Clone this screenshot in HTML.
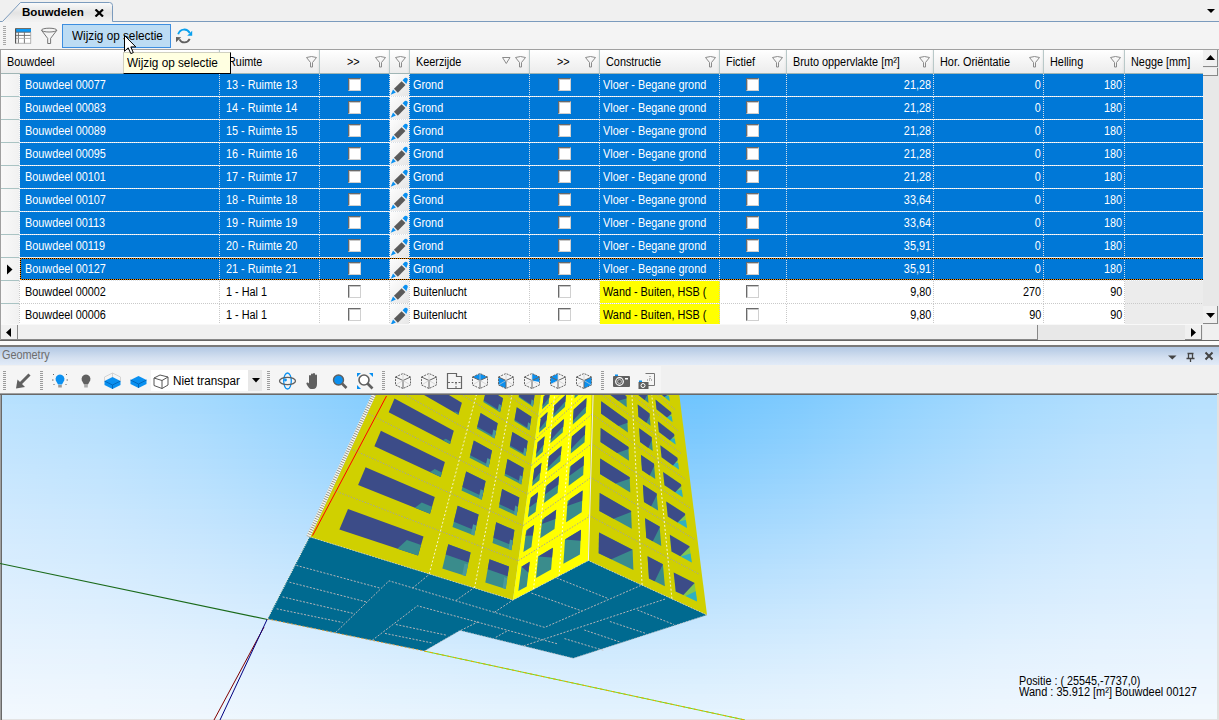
<!DOCTYPE html><html><head><meta charset="utf-8"><style>
*{box-sizing:border-box;margin:0;padding:0}
html,body{width:1219px;height:720px;overflow:hidden;background:#f0f0f0;font-family:"Liberation Sans",sans-serif;font-size:11px;color:#000;position:relative}
.a{position:absolute}
.t{position:absolute;white-space:nowrap;transform-origin:0 0}
.tr{position:absolute;white-space:nowrap;transform-origin:100% 0}
</style></head><body><div class="a" style="left:0px;top:0px;width:1219px;height:22px;background:#f0f0f0"></div>
<svg class="a" style="left:0;top:0" width="1219" height="24">
<defs><linearGradient id="tabg" x1="0" y1="0" x2="0" y2="1"><stop offset="0" stop-color="#fbfbfb"/><stop offset="0.55" stop-color="#e3e3e3"/><stop offset="1" stop-color="#f2f2f2"/></linearGradient></defs>
<path d="M2.5 21.5 L20.5 2.5 L109.5 2.5 Q112.5 2.5 112.5 5.5 L112.5 21.5 Z" fill="url(#tabg)"/>
<path d="M0 21.5 L2.5 21.5 L20.5 2.5 L109.5 2.5 Q112.5 2.5 112.5 5.5 L112.5 21.5 L1219 21.5" fill="none" stroke="#7b9bbd" stroke-width="1"/>
<path d="M1207 9 L1215 9 L1211 13 Z" fill="#000"/>
</svg>
<div class="t" style="left:22px;top:5px;line-height:13px;font-weight:bold;font-size:11.6px">Bouwdelen</div>
<svg class="a" style="left:94px;top:9px" width="11" height="8"><path d="M1.5 0.5 L9 7.5 M9 0.5 L1.5 7.5" stroke="#000" stroke-width="2.2"/></svg>
<div class="a" style="left:0px;top:22px;width:1219px;height:27px;background:#f4f4f4"></div>
<svg class="a" style="left:2px;top:25px" width="4" height="21"><rect x="1" y="1" width="3" height="1" fill="#a8a8a8"/><rect x="1" y="3" width="3" height="1" fill="#a8a8a8"/><rect x="1" y="5" width="3" height="1" fill="#a8a8a8"/><rect x="1" y="7" width="3" height="1" fill="#a8a8a8"/><rect x="1" y="9" width="3" height="1" fill="#a8a8a8"/><rect x="1" y="11" width="3" height="1" fill="#a8a8a8"/><rect x="1" y="13" width="3" height="1" fill="#a8a8a8"/><rect x="1" y="15" width="3" height="1" fill="#a8a8a8"/><rect x="1" y="17" width="3" height="1" fill="#a8a8a8"/><rect x="1" y="19" width="3" height="1" fill="#a8a8a8"/></svg>
<svg class="a" style="left:14px;top:27px" width="19" height="19">
<rect x="1.5" y="1.5" width="15.5" height="15" fill="#fff"/>
<rect x="1.5" y="1.5" width="15.5" height="3.8" fill="#0a9af8"/>
<path d="M1.5 1.5 H17" stroke="#705840" stroke-width="0.8"/>
<path d="M1.5 5.2 H17 M1.5 8.4 H17 M4.4 5.2 V16.6 M10.4 5.2 V16.6" stroke="#666" stroke-width="0.9"/>
<path d="M1.5 11.4 H17 M1.5 16.3 H17 M16.7 5.2 V16.6" stroke="#aaa" stroke-width="0.9"/>
<path d="M1.6 1.5 V16.6" stroke="#555" stroke-width="1.2"/>
</svg>
<svg class="a" style="left:40px;top:27px" width="19" height="19">
<ellipse cx="9.1" cy="3.1" rx="7.6" ry="1.9" fill="none" stroke="#666" stroke-width="0.9"/>
<path d="M1.5 3.3 L7.7 11.4 V16.5 H10.6 V11.4 L16.8 3.3" fill="none" stroke="#666" stroke-width="0.9"/>
</svg>
<div class="a" style="left:62px;top:24px;width:109px;height:24px;background:#bcdcf4;border:1px solid #3d8ee0"></div>
<div class="t" style="left:71.5px;top:29.84px;font-size:12px;line-height:12px;transform:scaleX(0.98);color:#000">Wijzig op selectie</div>
<svg class="a" style="left:175px;top:28px" width="19" height="17">
<path d="M3.2 6.2 C5 0.5 12 0 14.8 5" fill="none" stroke="#0aa0ee" stroke-width="1.9"/>
<path d="M17.2 2.8 L17.2 7.8 L12.2 7.8 Z" fill="#0aa0ee"/>
<path d="M14.7 10.8 C12.5 15.5 6.5 15.5 4.5 11.3" fill="none" stroke="#606060" stroke-width="1.9"/>
<path d="M1 9 L6.2 9.2 L1 14.2 Z" fill="#606060"/>
</svg>
<div class="a" style="left:0px;top:49px;width:1219px;height:292px;background:#ffffff"></div>
<div class="a" style="left:1px;top:50px;width:1202px;height:23px;background:linear-gradient(#ffffff,#f7f7f7 40%,#ececec)"></div>
<div class="a" style="left:1px;top:73px;width:1202px;height:1px;background:#9fb5b5"></div>
<div class="a" style="left:219px;top:50px;width:1px;height:23px;background:#b9c9c9"></div>
<div class="a" style="left:217px;top:50px;width:2px;height:23px;background:linear-gradient(90deg,rgba(0,0,0,0),rgba(0,0,0,0.05))"></div>
<div class="a" style="left:319px;top:50px;width:1px;height:23px;background:#b9c9c9"></div>
<div class="a" style="left:317px;top:50px;width:2px;height:23px;background:linear-gradient(90deg,rgba(0,0,0,0),rgba(0,0,0,0.05))"></div>
<div class="a" style="left:389px;top:50px;width:1px;height:23px;background:#b9c9c9"></div>
<div class="a" style="left:387px;top:50px;width:2px;height:23px;background:linear-gradient(90deg,rgba(0,0,0,0),rgba(0,0,0,0.05))"></div>
<div class="a" style="left:409px;top:50px;width:1px;height:23px;background:#b9c9c9"></div>
<div class="a" style="left:407px;top:50px;width:2px;height:23px;background:linear-gradient(90deg,rgba(0,0,0,0),rgba(0,0,0,0.05))"></div>
<div class="a" style="left:529px;top:50px;width:1px;height:23px;background:#b9c9c9"></div>
<div class="a" style="left:527px;top:50px;width:2px;height:23px;background:linear-gradient(90deg,rgba(0,0,0,0),rgba(0,0,0,0.05))"></div>
<div class="a" style="left:599px;top:50px;width:1px;height:23px;background:#b9c9c9"></div>
<div class="a" style="left:597px;top:50px;width:2px;height:23px;background:linear-gradient(90deg,rgba(0,0,0,0),rgba(0,0,0,0.05))"></div>
<div class="a" style="left:719px;top:50px;width:1px;height:23px;background:#b9c9c9"></div>
<div class="a" style="left:717px;top:50px;width:2px;height:23px;background:linear-gradient(90deg,rgba(0,0,0,0),rgba(0,0,0,0.05))"></div>
<div class="a" style="left:786px;top:50px;width:1px;height:23px;background:#b9c9c9"></div>
<div class="a" style="left:784px;top:50px;width:2px;height:23px;background:linear-gradient(90deg,rgba(0,0,0,0),rgba(0,0,0,0.05))"></div>
<div class="a" style="left:933px;top:50px;width:1px;height:23px;background:#b9c9c9"></div>
<div class="a" style="left:931px;top:50px;width:2px;height:23px;background:linear-gradient(90deg,rgba(0,0,0,0),rgba(0,0,0,0.05))"></div>
<div class="a" style="left:1043px;top:50px;width:1px;height:23px;background:#b9c9c9"></div>
<div class="a" style="left:1041px;top:50px;width:2px;height:23px;background:linear-gradient(90deg,rgba(0,0,0,0),rgba(0,0,0,0.05))"></div>
<div class="a" style="left:1124px;top:50px;width:1px;height:23px;background:#b9c9c9"></div>
<div class="a" style="left:1122px;top:50px;width:2px;height:23px;background:linear-gradient(90deg,rgba(0,0,0,0),rgba(0,0,0,0.05))"></div>
<div class="t" style="left:6.5px;top:55.74px;font-size:12px;line-height:12px;transform:scaleX(0.905);color:#000">Bouwdeel</div>
<div class="t" style="left:227.5px;top:55.74px;font-size:12px;line-height:12px;transform:scaleX(0.905);color:#000">Ruimte</div>
<div class="t" style="left:346.5px;top:55.74px;font-size:12px;line-height:12px;transform:scaleX(0.905);color:#000">&gt;&gt;</div>
<div class="t" style="left:415.5px;top:55.74px;font-size:12px;line-height:12px;transform:scaleX(0.905);color:#000">Keerzijde</div>
<div class="t" style="left:556.5px;top:55.74px;font-size:12px;line-height:12px;transform:scaleX(0.905);color:#000">&gt;&gt;</div>
<div class="t" style="left:605.5px;top:55.74px;font-size:12px;line-height:12px;transform:scaleX(0.905);color:#000">Constructie</div>
<div class="t" style="left:725.5px;top:55.74px;font-size:12px;line-height:12px;transform:scaleX(0.905);color:#000">Fictief</div>
<div class="t" style="left:792.5px;top:55.74px;font-size:12px;line-height:12px;transform:scaleX(0.905);color:#000">Bruto oppervlakte [m²]</div>
<div class="t" style="left:939.5px;top:55.74px;font-size:12px;line-height:12px;transform:scaleX(0.905);color:#000">Hor. Oriëntatie</div>
<div class="t" style="left:1049.5px;top:55.74px;font-size:12px;line-height:12px;transform:scaleX(0.905);color:#000">Helling</div>
<div class="t" style="left:1130.5px;top:55.74px;font-size:12px;line-height:12px;transform:scaleX(0.905);color:#000">Negge [mm]</div>
<svg class="a" style="left:205px;top:56px" width="12" height="12"><path d="M0.5 1.5 Q5.5 -0.5 10.5 1.5 L6.5 6.5 L6.5 11 L4.5 11 L4.5 6.5 Z" fill="none" stroke="#8a8a8a" stroke-width="1"/></svg>
<svg class="a" style="left:306px;top:56px" width="12" height="12"><path d="M0.5 1.5 Q5.5 -0.5 10.5 1.5 L6.5 6.5 L6.5 11 L4.5 11 L4.5 6.5 Z" fill="none" stroke="#8a8a8a" stroke-width="1"/></svg>
<svg class="a" style="left:375px;top:56px" width="12" height="12"><path d="M0.5 1.5 Q5.5 -0.5 10.5 1.5 L6.5 6.5 L6.5 11 L4.5 11 L4.5 6.5 Z" fill="none" stroke="#8a8a8a" stroke-width="1"/></svg>
<svg class="a" style="left:395px;top:56px" width="12" height="12"><path d="M0.5 1.5 Q5.5 -0.5 10.5 1.5 L6.5 6.5 L6.5 11 L4.5 11 L4.5 6.5 Z" fill="none" stroke="#8a8a8a" stroke-width="1"/></svg>
<svg class="a" style="left:515px;top:56px" width="12" height="12"><path d="M0.5 1.5 Q5.5 -0.5 10.5 1.5 L6.5 6.5 L6.5 11 L4.5 11 L4.5 6.5 Z" fill="none" stroke="#8a8a8a" stroke-width="1"/></svg>
<svg class="a" style="left:585px;top:56px" width="12" height="12"><path d="M0.5 1.5 Q5.5 -0.5 10.5 1.5 L6.5 6.5 L6.5 11 L4.5 11 L4.5 6.5 Z" fill="none" stroke="#8a8a8a" stroke-width="1"/></svg>
<svg class="a" style="left:705px;top:56px" width="12" height="12"><path d="M0.5 1.5 Q5.5 -0.5 10.5 1.5 L6.5 6.5 L6.5 11 L4.5 11 L4.5 6.5 Z" fill="none" stroke="#8a8a8a" stroke-width="1"/></svg>
<svg class="a" style="left:772px;top:56px" width="12" height="12"><path d="M0.5 1.5 Q5.5 -0.5 10.5 1.5 L6.5 6.5 L6.5 11 L4.5 11 L4.5 6.5 Z" fill="none" stroke="#8a8a8a" stroke-width="1"/></svg>
<svg class="a" style="left:919px;top:56px" width="12" height="12"><path d="M0.5 1.5 Q5.5 -0.5 10.5 1.5 L6.5 6.5 L6.5 11 L4.5 11 L4.5 6.5 Z" fill="none" stroke="#8a8a8a" stroke-width="1"/></svg>
<svg class="a" style="left:1029px;top:56px" width="12" height="12"><path d="M0.5 1.5 Q5.5 -0.5 10.5 1.5 L6.5 6.5 L6.5 11 L4.5 11 L4.5 6.5 Z" fill="none" stroke="#8a8a8a" stroke-width="1"/></svg>
<svg class="a" style="left:1110px;top:56px" width="12" height="12"><path d="M0.5 1.5 Q5.5 -0.5 10.5 1.5 L6.5 6.5 L6.5 11 L4.5 11 L4.5 6.5 Z" fill="none" stroke="#8a8a8a" stroke-width="1"/></svg>
<svg class="a" style="left:502px;top:57px" width="9" height="8"><path d="M0.5 0.5 H8 L4.25 6.5 Z" fill="none" stroke="#8a8a8a"/></svg>
<div class="a" style="left:1px;top:74px;width:18px;height:22px;background:linear-gradient(90deg,#f9f9f9,#f1f1f1)"></div>
<div class="a" style="left:1px;top:96px;width:18px;height:1px;background:#a9c3c3"></div>
<div class="a" style="left:20px;top:74px;width:1183px;height:22px;background:#0078d7"></div>
<div class="a" style="left:19px;top:96px;width:1106px;height:1px;background:repeating-linear-gradient(90deg,#d9dfe6 0 1px,transparent 1px 2px)"></div>
<div class="a" style="left:1125px;top:96px;width:78px;height:1px;background:repeating-linear-gradient(90deg,#d9dfe6 0 1px,transparent 1px 2px)"></div>
<div class="a" style="left:19px;top:74px;width:1px;height:22px;background:repeating-linear-gradient(180deg,#d9dfe6 0 1px,transparent 1px 2px)"></div>
<div class="a" style="left:219px;top:74px;width:1px;height:22px;background:repeating-linear-gradient(180deg,#d9dfe6 0 1px,transparent 1px 2px)"></div>
<div class="a" style="left:319px;top:74px;width:1px;height:22px;background:repeating-linear-gradient(180deg,#d9dfe6 0 1px,transparent 1px 2px)"></div>
<div class="a" style="left:389px;top:74px;width:1px;height:22px;background:repeating-linear-gradient(180deg,#d9dfe6 0 1px,transparent 1px 2px)"></div>
<div class="a" style="left:409px;top:74px;width:1px;height:22px;background:repeating-linear-gradient(180deg,#d9dfe6 0 1px,transparent 1px 2px)"></div>
<div class="a" style="left:529px;top:74px;width:1px;height:22px;background:repeating-linear-gradient(180deg,#d9dfe6 0 1px,transparent 1px 2px)"></div>
<div class="a" style="left:599px;top:74px;width:1px;height:22px;background:repeating-linear-gradient(180deg,#d9dfe6 0 1px,transparent 1px 2px)"></div>
<div class="a" style="left:719px;top:74px;width:1px;height:22px;background:repeating-linear-gradient(180deg,#d9dfe6 0 1px,transparent 1px 2px)"></div>
<div class="a" style="left:786px;top:74px;width:1px;height:22px;background:repeating-linear-gradient(180deg,#d9dfe6 0 1px,transparent 1px 2px)"></div>
<div class="a" style="left:933px;top:74px;width:1px;height:22px;background:repeating-linear-gradient(180deg,#d9dfe6 0 1px,transparent 1px 2px)"></div>
<div class="a" style="left:1043px;top:74px;width:1px;height:22px;background:repeating-linear-gradient(180deg,#d9dfe6 0 1px,transparent 1px 2px)"></div>
<div class="a" style="left:1124px;top:74px;width:1px;height:22px;background:repeating-linear-gradient(180deg,#d9dfe6 0 1px,transparent 1px 2px)"></div>
<div class="t" style="left:25px;top:78.74px;font-size:12px;line-height:12px;transform:scaleX(0.905);color:#fff">Bouwdeel 00077</div>
<div class="t" style="left:226px;top:78.74px;font-size:12px;line-height:12px;transform:scaleX(0.905);color:#fff">13 - Ruimte 13</div>
<div class="t" style="left:413px;top:78.74px;font-size:12px;line-height:12px;transform:scaleX(0.905);color:#fff">Grond</div>
<div class="t" style="left:603px;top:78.74px;font-size:12px;line-height:12px;transform:scaleX(0.905);color:#fff">Vloer - Begane grond</div>
<div class="tr" style="right:288px;top:78.74px;font-size:12px;line-height:12px;transform:scaleX(0.905);color:#fff">21,28</div>
<div class="tr" style="right:178px;top:78.74px;font-size:12px;line-height:12px;transform:scaleX(0.905);color:#fff">0</div>
<div class="tr" style="right:97px;top:78.74px;font-size:12px;line-height:12px;transform:scaleX(0.905);color:#fff">180</div>
<div class="a" style="left:348px;top:78px;width:13px;height:13px;background:#fff;border:1px solid #6a6a6a;border-right-color:#d0d0d0;border-bottom-color:#d0d0d0;box-shadow:inset 1px 1px 0 #c8c8c8"></div>
<div class="a" style="left:558px;top:78px;width:13px;height:13px;background:#fff;border:1px solid #6a6a6a;border-right-color:#d0d0d0;border-bottom-color:#d0d0d0;box-shadow:inset 1px 1px 0 #c8c8c8"></div>
<div class="a" style="left:746px;top:78px;width:13px;height:13px;background:#fff;border:1px solid #6a6a6a;border-right-color:#d0d0d0;border-bottom-color:#d0d0d0;box-shadow:inset 1px 1px 0 #c8c8c8"></div>
<div class="a" style="left:390px;top:74px;width:19px;height:22px;background:linear-gradient(135deg,#fdfdfd,#e6e6e6)"></div>
<svg class="a" style="left:390px;top:76px" width="19" height="20"><g transform="translate(9 10.2) scale(1.15) translate(-9.2 -9.6)"><path d="M2 17 L4 12.5 L6.5 15 Z" fill="#0a90f0"/><path d="M4.8 11.8 L11.5 5.2 L14.8 8.5 L8.2 15.2 Z" fill="#5a5a5a"/><path d="M12.3 4.4 L14.2 2.5 Q15.5 1.8 16.5 2.8 Q17.3 4 16.5 5 L15.6 7.7 Z" fill="#0a90f0"/></g></svg>
<div class="a" style="left:1px;top:97px;width:18px;height:22px;background:linear-gradient(90deg,#f9f9f9,#f1f1f1)"></div>
<div class="a" style="left:1px;top:119px;width:18px;height:1px;background:#a9c3c3"></div>
<div class="a" style="left:20px;top:97px;width:1183px;height:22px;background:#0078d7"></div>
<div class="a" style="left:19px;top:119px;width:1106px;height:1px;background:repeating-linear-gradient(90deg,#d9dfe6 0 1px,transparent 1px 2px)"></div>
<div class="a" style="left:1125px;top:119px;width:78px;height:1px;background:repeating-linear-gradient(90deg,#d9dfe6 0 1px,transparent 1px 2px)"></div>
<div class="a" style="left:19px;top:97px;width:1px;height:22px;background:repeating-linear-gradient(180deg,#d9dfe6 0 1px,transparent 1px 2px)"></div>
<div class="a" style="left:219px;top:97px;width:1px;height:22px;background:repeating-linear-gradient(180deg,#d9dfe6 0 1px,transparent 1px 2px)"></div>
<div class="a" style="left:319px;top:97px;width:1px;height:22px;background:repeating-linear-gradient(180deg,#d9dfe6 0 1px,transparent 1px 2px)"></div>
<div class="a" style="left:389px;top:97px;width:1px;height:22px;background:repeating-linear-gradient(180deg,#d9dfe6 0 1px,transparent 1px 2px)"></div>
<div class="a" style="left:409px;top:97px;width:1px;height:22px;background:repeating-linear-gradient(180deg,#d9dfe6 0 1px,transparent 1px 2px)"></div>
<div class="a" style="left:529px;top:97px;width:1px;height:22px;background:repeating-linear-gradient(180deg,#d9dfe6 0 1px,transparent 1px 2px)"></div>
<div class="a" style="left:599px;top:97px;width:1px;height:22px;background:repeating-linear-gradient(180deg,#d9dfe6 0 1px,transparent 1px 2px)"></div>
<div class="a" style="left:719px;top:97px;width:1px;height:22px;background:repeating-linear-gradient(180deg,#d9dfe6 0 1px,transparent 1px 2px)"></div>
<div class="a" style="left:786px;top:97px;width:1px;height:22px;background:repeating-linear-gradient(180deg,#d9dfe6 0 1px,transparent 1px 2px)"></div>
<div class="a" style="left:933px;top:97px;width:1px;height:22px;background:repeating-linear-gradient(180deg,#d9dfe6 0 1px,transparent 1px 2px)"></div>
<div class="a" style="left:1043px;top:97px;width:1px;height:22px;background:repeating-linear-gradient(180deg,#d9dfe6 0 1px,transparent 1px 2px)"></div>
<div class="a" style="left:1124px;top:97px;width:1px;height:22px;background:repeating-linear-gradient(180deg,#d9dfe6 0 1px,transparent 1px 2px)"></div>
<div class="t" style="left:25px;top:101.74px;font-size:12px;line-height:12px;transform:scaleX(0.905);color:#fff">Bouwdeel 00083</div>
<div class="t" style="left:226px;top:101.74px;font-size:12px;line-height:12px;transform:scaleX(0.905);color:#fff">14 - Ruimte 14</div>
<div class="t" style="left:413px;top:101.74px;font-size:12px;line-height:12px;transform:scaleX(0.905);color:#fff">Grond</div>
<div class="t" style="left:603px;top:101.74px;font-size:12px;line-height:12px;transform:scaleX(0.905);color:#fff">Vloer - Begane grond</div>
<div class="tr" style="right:288px;top:101.74px;font-size:12px;line-height:12px;transform:scaleX(0.905);color:#fff">21,28</div>
<div class="tr" style="right:178px;top:101.74px;font-size:12px;line-height:12px;transform:scaleX(0.905);color:#fff">0</div>
<div class="tr" style="right:97px;top:101.74px;font-size:12px;line-height:12px;transform:scaleX(0.905);color:#fff">180</div>
<div class="a" style="left:348px;top:101px;width:13px;height:13px;background:#fff;border:1px solid #6a6a6a;border-right-color:#d0d0d0;border-bottom-color:#d0d0d0;box-shadow:inset 1px 1px 0 #c8c8c8"></div>
<div class="a" style="left:558px;top:101px;width:13px;height:13px;background:#fff;border:1px solid #6a6a6a;border-right-color:#d0d0d0;border-bottom-color:#d0d0d0;box-shadow:inset 1px 1px 0 #c8c8c8"></div>
<div class="a" style="left:746px;top:101px;width:13px;height:13px;background:#fff;border:1px solid #6a6a6a;border-right-color:#d0d0d0;border-bottom-color:#d0d0d0;box-shadow:inset 1px 1px 0 #c8c8c8"></div>
<div class="a" style="left:390px;top:97px;width:19px;height:22px;background:linear-gradient(135deg,#fdfdfd,#e6e6e6)"></div>
<svg class="a" style="left:390px;top:99px" width="19" height="20"><g transform="translate(9 10.2) scale(1.15) translate(-9.2 -9.6)"><path d="M2 17 L4 12.5 L6.5 15 Z" fill="#0a90f0"/><path d="M4.8 11.8 L11.5 5.2 L14.8 8.5 L8.2 15.2 Z" fill="#5a5a5a"/><path d="M12.3 4.4 L14.2 2.5 Q15.5 1.8 16.5 2.8 Q17.3 4 16.5 5 L15.6 7.7 Z" fill="#0a90f0"/></g></svg>
<div class="a" style="left:1px;top:120px;width:18px;height:22px;background:linear-gradient(90deg,#f9f9f9,#f1f1f1)"></div>
<div class="a" style="left:1px;top:142px;width:18px;height:1px;background:#a9c3c3"></div>
<div class="a" style="left:20px;top:120px;width:1183px;height:22px;background:#0078d7"></div>
<div class="a" style="left:19px;top:142px;width:1106px;height:1px;background:repeating-linear-gradient(90deg,#d9dfe6 0 1px,transparent 1px 2px)"></div>
<div class="a" style="left:1125px;top:142px;width:78px;height:1px;background:repeating-linear-gradient(90deg,#d9dfe6 0 1px,transparent 1px 2px)"></div>
<div class="a" style="left:19px;top:120px;width:1px;height:22px;background:repeating-linear-gradient(180deg,#d9dfe6 0 1px,transparent 1px 2px)"></div>
<div class="a" style="left:219px;top:120px;width:1px;height:22px;background:repeating-linear-gradient(180deg,#d9dfe6 0 1px,transparent 1px 2px)"></div>
<div class="a" style="left:319px;top:120px;width:1px;height:22px;background:repeating-linear-gradient(180deg,#d9dfe6 0 1px,transparent 1px 2px)"></div>
<div class="a" style="left:389px;top:120px;width:1px;height:22px;background:repeating-linear-gradient(180deg,#d9dfe6 0 1px,transparent 1px 2px)"></div>
<div class="a" style="left:409px;top:120px;width:1px;height:22px;background:repeating-linear-gradient(180deg,#d9dfe6 0 1px,transparent 1px 2px)"></div>
<div class="a" style="left:529px;top:120px;width:1px;height:22px;background:repeating-linear-gradient(180deg,#d9dfe6 0 1px,transparent 1px 2px)"></div>
<div class="a" style="left:599px;top:120px;width:1px;height:22px;background:repeating-linear-gradient(180deg,#d9dfe6 0 1px,transparent 1px 2px)"></div>
<div class="a" style="left:719px;top:120px;width:1px;height:22px;background:repeating-linear-gradient(180deg,#d9dfe6 0 1px,transparent 1px 2px)"></div>
<div class="a" style="left:786px;top:120px;width:1px;height:22px;background:repeating-linear-gradient(180deg,#d9dfe6 0 1px,transparent 1px 2px)"></div>
<div class="a" style="left:933px;top:120px;width:1px;height:22px;background:repeating-linear-gradient(180deg,#d9dfe6 0 1px,transparent 1px 2px)"></div>
<div class="a" style="left:1043px;top:120px;width:1px;height:22px;background:repeating-linear-gradient(180deg,#d9dfe6 0 1px,transparent 1px 2px)"></div>
<div class="a" style="left:1124px;top:120px;width:1px;height:22px;background:repeating-linear-gradient(180deg,#d9dfe6 0 1px,transparent 1px 2px)"></div>
<div class="t" style="left:25px;top:124.74px;font-size:12px;line-height:12px;transform:scaleX(0.905);color:#fff">Bouwdeel 00089</div>
<div class="t" style="left:226px;top:124.74px;font-size:12px;line-height:12px;transform:scaleX(0.905);color:#fff">15 - Ruimte 15</div>
<div class="t" style="left:413px;top:124.74px;font-size:12px;line-height:12px;transform:scaleX(0.905);color:#fff">Grond</div>
<div class="t" style="left:603px;top:124.74px;font-size:12px;line-height:12px;transform:scaleX(0.905);color:#fff">Vloer - Begane grond</div>
<div class="tr" style="right:288px;top:124.74px;font-size:12px;line-height:12px;transform:scaleX(0.905);color:#fff">21,28</div>
<div class="tr" style="right:178px;top:124.74px;font-size:12px;line-height:12px;transform:scaleX(0.905);color:#fff">0</div>
<div class="tr" style="right:97px;top:124.74px;font-size:12px;line-height:12px;transform:scaleX(0.905);color:#fff">180</div>
<div class="a" style="left:348px;top:124px;width:13px;height:13px;background:#fff;border:1px solid #6a6a6a;border-right-color:#d0d0d0;border-bottom-color:#d0d0d0;box-shadow:inset 1px 1px 0 #c8c8c8"></div>
<div class="a" style="left:558px;top:124px;width:13px;height:13px;background:#fff;border:1px solid #6a6a6a;border-right-color:#d0d0d0;border-bottom-color:#d0d0d0;box-shadow:inset 1px 1px 0 #c8c8c8"></div>
<div class="a" style="left:746px;top:124px;width:13px;height:13px;background:#fff;border:1px solid #6a6a6a;border-right-color:#d0d0d0;border-bottom-color:#d0d0d0;box-shadow:inset 1px 1px 0 #c8c8c8"></div>
<div class="a" style="left:390px;top:120px;width:19px;height:22px;background:linear-gradient(135deg,#fdfdfd,#e6e6e6)"></div>
<svg class="a" style="left:390px;top:122px" width="19" height="20"><g transform="translate(9 10.2) scale(1.15) translate(-9.2 -9.6)"><path d="M2 17 L4 12.5 L6.5 15 Z" fill="#0a90f0"/><path d="M4.8 11.8 L11.5 5.2 L14.8 8.5 L8.2 15.2 Z" fill="#5a5a5a"/><path d="M12.3 4.4 L14.2 2.5 Q15.5 1.8 16.5 2.8 Q17.3 4 16.5 5 L15.6 7.7 Z" fill="#0a90f0"/></g></svg>
<div class="a" style="left:1px;top:143px;width:18px;height:22px;background:linear-gradient(90deg,#f9f9f9,#f1f1f1)"></div>
<div class="a" style="left:1px;top:165px;width:18px;height:1px;background:#a9c3c3"></div>
<div class="a" style="left:20px;top:143px;width:1183px;height:22px;background:#0078d7"></div>
<div class="a" style="left:19px;top:165px;width:1106px;height:1px;background:repeating-linear-gradient(90deg,#d9dfe6 0 1px,transparent 1px 2px)"></div>
<div class="a" style="left:1125px;top:165px;width:78px;height:1px;background:repeating-linear-gradient(90deg,#d9dfe6 0 1px,transparent 1px 2px)"></div>
<div class="a" style="left:19px;top:143px;width:1px;height:22px;background:repeating-linear-gradient(180deg,#d9dfe6 0 1px,transparent 1px 2px)"></div>
<div class="a" style="left:219px;top:143px;width:1px;height:22px;background:repeating-linear-gradient(180deg,#d9dfe6 0 1px,transparent 1px 2px)"></div>
<div class="a" style="left:319px;top:143px;width:1px;height:22px;background:repeating-linear-gradient(180deg,#d9dfe6 0 1px,transparent 1px 2px)"></div>
<div class="a" style="left:389px;top:143px;width:1px;height:22px;background:repeating-linear-gradient(180deg,#d9dfe6 0 1px,transparent 1px 2px)"></div>
<div class="a" style="left:409px;top:143px;width:1px;height:22px;background:repeating-linear-gradient(180deg,#d9dfe6 0 1px,transparent 1px 2px)"></div>
<div class="a" style="left:529px;top:143px;width:1px;height:22px;background:repeating-linear-gradient(180deg,#d9dfe6 0 1px,transparent 1px 2px)"></div>
<div class="a" style="left:599px;top:143px;width:1px;height:22px;background:repeating-linear-gradient(180deg,#d9dfe6 0 1px,transparent 1px 2px)"></div>
<div class="a" style="left:719px;top:143px;width:1px;height:22px;background:repeating-linear-gradient(180deg,#d9dfe6 0 1px,transparent 1px 2px)"></div>
<div class="a" style="left:786px;top:143px;width:1px;height:22px;background:repeating-linear-gradient(180deg,#d9dfe6 0 1px,transparent 1px 2px)"></div>
<div class="a" style="left:933px;top:143px;width:1px;height:22px;background:repeating-linear-gradient(180deg,#d9dfe6 0 1px,transparent 1px 2px)"></div>
<div class="a" style="left:1043px;top:143px;width:1px;height:22px;background:repeating-linear-gradient(180deg,#d9dfe6 0 1px,transparent 1px 2px)"></div>
<div class="a" style="left:1124px;top:143px;width:1px;height:22px;background:repeating-linear-gradient(180deg,#d9dfe6 0 1px,transparent 1px 2px)"></div>
<div class="t" style="left:25px;top:147.74px;font-size:12px;line-height:12px;transform:scaleX(0.905);color:#fff">Bouwdeel 00095</div>
<div class="t" style="left:226px;top:147.74px;font-size:12px;line-height:12px;transform:scaleX(0.905);color:#fff">16 - Ruimte 16</div>
<div class="t" style="left:413px;top:147.74px;font-size:12px;line-height:12px;transform:scaleX(0.905);color:#fff">Grond</div>
<div class="t" style="left:603px;top:147.74px;font-size:12px;line-height:12px;transform:scaleX(0.905);color:#fff">Vloer - Begane grond</div>
<div class="tr" style="right:288px;top:147.74px;font-size:12px;line-height:12px;transform:scaleX(0.905);color:#fff">21,28</div>
<div class="tr" style="right:178px;top:147.74px;font-size:12px;line-height:12px;transform:scaleX(0.905);color:#fff">0</div>
<div class="tr" style="right:97px;top:147.74px;font-size:12px;line-height:12px;transform:scaleX(0.905);color:#fff">180</div>
<div class="a" style="left:348px;top:147px;width:13px;height:13px;background:#fff;border:1px solid #6a6a6a;border-right-color:#d0d0d0;border-bottom-color:#d0d0d0;box-shadow:inset 1px 1px 0 #c8c8c8"></div>
<div class="a" style="left:558px;top:147px;width:13px;height:13px;background:#fff;border:1px solid #6a6a6a;border-right-color:#d0d0d0;border-bottom-color:#d0d0d0;box-shadow:inset 1px 1px 0 #c8c8c8"></div>
<div class="a" style="left:746px;top:147px;width:13px;height:13px;background:#fff;border:1px solid #6a6a6a;border-right-color:#d0d0d0;border-bottom-color:#d0d0d0;box-shadow:inset 1px 1px 0 #c8c8c8"></div>
<div class="a" style="left:390px;top:143px;width:19px;height:22px;background:linear-gradient(135deg,#fdfdfd,#e6e6e6)"></div>
<svg class="a" style="left:390px;top:145px" width="19" height="20"><g transform="translate(9 10.2) scale(1.15) translate(-9.2 -9.6)"><path d="M2 17 L4 12.5 L6.5 15 Z" fill="#0a90f0"/><path d="M4.8 11.8 L11.5 5.2 L14.8 8.5 L8.2 15.2 Z" fill="#5a5a5a"/><path d="M12.3 4.4 L14.2 2.5 Q15.5 1.8 16.5 2.8 Q17.3 4 16.5 5 L15.6 7.7 Z" fill="#0a90f0"/></g></svg>
<div class="a" style="left:1px;top:166px;width:18px;height:22px;background:linear-gradient(90deg,#f9f9f9,#f1f1f1)"></div>
<div class="a" style="left:1px;top:188px;width:18px;height:1px;background:#a9c3c3"></div>
<div class="a" style="left:20px;top:166px;width:1183px;height:22px;background:#0078d7"></div>
<div class="a" style="left:19px;top:188px;width:1106px;height:1px;background:repeating-linear-gradient(90deg,#d9dfe6 0 1px,transparent 1px 2px)"></div>
<div class="a" style="left:1125px;top:188px;width:78px;height:1px;background:repeating-linear-gradient(90deg,#d9dfe6 0 1px,transparent 1px 2px)"></div>
<div class="a" style="left:19px;top:166px;width:1px;height:22px;background:repeating-linear-gradient(180deg,#d9dfe6 0 1px,transparent 1px 2px)"></div>
<div class="a" style="left:219px;top:166px;width:1px;height:22px;background:repeating-linear-gradient(180deg,#d9dfe6 0 1px,transparent 1px 2px)"></div>
<div class="a" style="left:319px;top:166px;width:1px;height:22px;background:repeating-linear-gradient(180deg,#d9dfe6 0 1px,transparent 1px 2px)"></div>
<div class="a" style="left:389px;top:166px;width:1px;height:22px;background:repeating-linear-gradient(180deg,#d9dfe6 0 1px,transparent 1px 2px)"></div>
<div class="a" style="left:409px;top:166px;width:1px;height:22px;background:repeating-linear-gradient(180deg,#d9dfe6 0 1px,transparent 1px 2px)"></div>
<div class="a" style="left:529px;top:166px;width:1px;height:22px;background:repeating-linear-gradient(180deg,#d9dfe6 0 1px,transparent 1px 2px)"></div>
<div class="a" style="left:599px;top:166px;width:1px;height:22px;background:repeating-linear-gradient(180deg,#d9dfe6 0 1px,transparent 1px 2px)"></div>
<div class="a" style="left:719px;top:166px;width:1px;height:22px;background:repeating-linear-gradient(180deg,#d9dfe6 0 1px,transparent 1px 2px)"></div>
<div class="a" style="left:786px;top:166px;width:1px;height:22px;background:repeating-linear-gradient(180deg,#d9dfe6 0 1px,transparent 1px 2px)"></div>
<div class="a" style="left:933px;top:166px;width:1px;height:22px;background:repeating-linear-gradient(180deg,#d9dfe6 0 1px,transparent 1px 2px)"></div>
<div class="a" style="left:1043px;top:166px;width:1px;height:22px;background:repeating-linear-gradient(180deg,#d9dfe6 0 1px,transparent 1px 2px)"></div>
<div class="a" style="left:1124px;top:166px;width:1px;height:22px;background:repeating-linear-gradient(180deg,#d9dfe6 0 1px,transparent 1px 2px)"></div>
<div class="t" style="left:25px;top:170.74px;font-size:12px;line-height:12px;transform:scaleX(0.905);color:#fff">Bouwdeel 00101</div>
<div class="t" style="left:226px;top:170.74px;font-size:12px;line-height:12px;transform:scaleX(0.905);color:#fff">17 - Ruimte 17</div>
<div class="t" style="left:413px;top:170.74px;font-size:12px;line-height:12px;transform:scaleX(0.905);color:#fff">Grond</div>
<div class="t" style="left:603px;top:170.74px;font-size:12px;line-height:12px;transform:scaleX(0.905);color:#fff">Vloer - Begane grond</div>
<div class="tr" style="right:288px;top:170.74px;font-size:12px;line-height:12px;transform:scaleX(0.905);color:#fff">21,28</div>
<div class="tr" style="right:178px;top:170.74px;font-size:12px;line-height:12px;transform:scaleX(0.905);color:#fff">0</div>
<div class="tr" style="right:97px;top:170.74px;font-size:12px;line-height:12px;transform:scaleX(0.905);color:#fff">180</div>
<div class="a" style="left:348px;top:170px;width:13px;height:13px;background:#fff;border:1px solid #6a6a6a;border-right-color:#d0d0d0;border-bottom-color:#d0d0d0;box-shadow:inset 1px 1px 0 #c8c8c8"></div>
<div class="a" style="left:558px;top:170px;width:13px;height:13px;background:#fff;border:1px solid #6a6a6a;border-right-color:#d0d0d0;border-bottom-color:#d0d0d0;box-shadow:inset 1px 1px 0 #c8c8c8"></div>
<div class="a" style="left:746px;top:170px;width:13px;height:13px;background:#fff;border:1px solid #6a6a6a;border-right-color:#d0d0d0;border-bottom-color:#d0d0d0;box-shadow:inset 1px 1px 0 #c8c8c8"></div>
<div class="a" style="left:390px;top:166px;width:19px;height:22px;background:linear-gradient(135deg,#fdfdfd,#e6e6e6)"></div>
<svg class="a" style="left:390px;top:168px" width="19" height="20"><g transform="translate(9 10.2) scale(1.15) translate(-9.2 -9.6)"><path d="M2 17 L4 12.5 L6.5 15 Z" fill="#0a90f0"/><path d="M4.8 11.8 L11.5 5.2 L14.8 8.5 L8.2 15.2 Z" fill="#5a5a5a"/><path d="M12.3 4.4 L14.2 2.5 Q15.5 1.8 16.5 2.8 Q17.3 4 16.5 5 L15.6 7.7 Z" fill="#0a90f0"/></g></svg>
<div class="a" style="left:1px;top:189px;width:18px;height:22px;background:linear-gradient(90deg,#f9f9f9,#f1f1f1)"></div>
<div class="a" style="left:1px;top:211px;width:18px;height:1px;background:#a9c3c3"></div>
<div class="a" style="left:20px;top:189px;width:1183px;height:22px;background:#0078d7"></div>
<div class="a" style="left:19px;top:211px;width:1106px;height:1px;background:repeating-linear-gradient(90deg,#d9dfe6 0 1px,transparent 1px 2px)"></div>
<div class="a" style="left:1125px;top:211px;width:78px;height:1px;background:repeating-linear-gradient(90deg,#d9dfe6 0 1px,transparent 1px 2px)"></div>
<div class="a" style="left:19px;top:189px;width:1px;height:22px;background:repeating-linear-gradient(180deg,#d9dfe6 0 1px,transparent 1px 2px)"></div>
<div class="a" style="left:219px;top:189px;width:1px;height:22px;background:repeating-linear-gradient(180deg,#d9dfe6 0 1px,transparent 1px 2px)"></div>
<div class="a" style="left:319px;top:189px;width:1px;height:22px;background:repeating-linear-gradient(180deg,#d9dfe6 0 1px,transparent 1px 2px)"></div>
<div class="a" style="left:389px;top:189px;width:1px;height:22px;background:repeating-linear-gradient(180deg,#d9dfe6 0 1px,transparent 1px 2px)"></div>
<div class="a" style="left:409px;top:189px;width:1px;height:22px;background:repeating-linear-gradient(180deg,#d9dfe6 0 1px,transparent 1px 2px)"></div>
<div class="a" style="left:529px;top:189px;width:1px;height:22px;background:repeating-linear-gradient(180deg,#d9dfe6 0 1px,transparent 1px 2px)"></div>
<div class="a" style="left:599px;top:189px;width:1px;height:22px;background:repeating-linear-gradient(180deg,#d9dfe6 0 1px,transparent 1px 2px)"></div>
<div class="a" style="left:719px;top:189px;width:1px;height:22px;background:repeating-linear-gradient(180deg,#d9dfe6 0 1px,transparent 1px 2px)"></div>
<div class="a" style="left:786px;top:189px;width:1px;height:22px;background:repeating-linear-gradient(180deg,#d9dfe6 0 1px,transparent 1px 2px)"></div>
<div class="a" style="left:933px;top:189px;width:1px;height:22px;background:repeating-linear-gradient(180deg,#d9dfe6 0 1px,transparent 1px 2px)"></div>
<div class="a" style="left:1043px;top:189px;width:1px;height:22px;background:repeating-linear-gradient(180deg,#d9dfe6 0 1px,transparent 1px 2px)"></div>
<div class="a" style="left:1124px;top:189px;width:1px;height:22px;background:repeating-linear-gradient(180deg,#d9dfe6 0 1px,transparent 1px 2px)"></div>
<div class="t" style="left:25px;top:193.74px;font-size:12px;line-height:12px;transform:scaleX(0.905);color:#fff">Bouwdeel 00107</div>
<div class="t" style="left:226px;top:193.74px;font-size:12px;line-height:12px;transform:scaleX(0.905);color:#fff">18 - Ruimte 18</div>
<div class="t" style="left:413px;top:193.74px;font-size:12px;line-height:12px;transform:scaleX(0.905);color:#fff">Grond</div>
<div class="t" style="left:603px;top:193.74px;font-size:12px;line-height:12px;transform:scaleX(0.905);color:#fff">Vloer - Begane grond</div>
<div class="tr" style="right:288px;top:193.74px;font-size:12px;line-height:12px;transform:scaleX(0.905);color:#fff">33,64</div>
<div class="tr" style="right:178px;top:193.74px;font-size:12px;line-height:12px;transform:scaleX(0.905);color:#fff">0</div>
<div class="tr" style="right:97px;top:193.74px;font-size:12px;line-height:12px;transform:scaleX(0.905);color:#fff">180</div>
<div class="a" style="left:348px;top:193px;width:13px;height:13px;background:#fff;border:1px solid #6a6a6a;border-right-color:#d0d0d0;border-bottom-color:#d0d0d0;box-shadow:inset 1px 1px 0 #c8c8c8"></div>
<div class="a" style="left:558px;top:193px;width:13px;height:13px;background:#fff;border:1px solid #6a6a6a;border-right-color:#d0d0d0;border-bottom-color:#d0d0d0;box-shadow:inset 1px 1px 0 #c8c8c8"></div>
<div class="a" style="left:746px;top:193px;width:13px;height:13px;background:#fff;border:1px solid #6a6a6a;border-right-color:#d0d0d0;border-bottom-color:#d0d0d0;box-shadow:inset 1px 1px 0 #c8c8c8"></div>
<div class="a" style="left:390px;top:189px;width:19px;height:22px;background:linear-gradient(135deg,#fdfdfd,#e6e6e6)"></div>
<svg class="a" style="left:390px;top:191px" width="19" height="20"><g transform="translate(9 10.2) scale(1.15) translate(-9.2 -9.6)"><path d="M2 17 L4 12.5 L6.5 15 Z" fill="#0a90f0"/><path d="M4.8 11.8 L11.5 5.2 L14.8 8.5 L8.2 15.2 Z" fill="#5a5a5a"/><path d="M12.3 4.4 L14.2 2.5 Q15.5 1.8 16.5 2.8 Q17.3 4 16.5 5 L15.6 7.7 Z" fill="#0a90f0"/></g></svg>
<div class="a" style="left:1px;top:212px;width:18px;height:22px;background:linear-gradient(90deg,#f9f9f9,#f1f1f1)"></div>
<div class="a" style="left:1px;top:234px;width:18px;height:1px;background:#a9c3c3"></div>
<div class="a" style="left:20px;top:212px;width:1183px;height:22px;background:#0078d7"></div>
<div class="a" style="left:19px;top:234px;width:1106px;height:1px;background:repeating-linear-gradient(90deg,#d9dfe6 0 1px,transparent 1px 2px)"></div>
<div class="a" style="left:1125px;top:234px;width:78px;height:1px;background:repeating-linear-gradient(90deg,#d9dfe6 0 1px,transparent 1px 2px)"></div>
<div class="a" style="left:19px;top:212px;width:1px;height:22px;background:repeating-linear-gradient(180deg,#d9dfe6 0 1px,transparent 1px 2px)"></div>
<div class="a" style="left:219px;top:212px;width:1px;height:22px;background:repeating-linear-gradient(180deg,#d9dfe6 0 1px,transparent 1px 2px)"></div>
<div class="a" style="left:319px;top:212px;width:1px;height:22px;background:repeating-linear-gradient(180deg,#d9dfe6 0 1px,transparent 1px 2px)"></div>
<div class="a" style="left:389px;top:212px;width:1px;height:22px;background:repeating-linear-gradient(180deg,#d9dfe6 0 1px,transparent 1px 2px)"></div>
<div class="a" style="left:409px;top:212px;width:1px;height:22px;background:repeating-linear-gradient(180deg,#d9dfe6 0 1px,transparent 1px 2px)"></div>
<div class="a" style="left:529px;top:212px;width:1px;height:22px;background:repeating-linear-gradient(180deg,#d9dfe6 0 1px,transparent 1px 2px)"></div>
<div class="a" style="left:599px;top:212px;width:1px;height:22px;background:repeating-linear-gradient(180deg,#d9dfe6 0 1px,transparent 1px 2px)"></div>
<div class="a" style="left:719px;top:212px;width:1px;height:22px;background:repeating-linear-gradient(180deg,#d9dfe6 0 1px,transparent 1px 2px)"></div>
<div class="a" style="left:786px;top:212px;width:1px;height:22px;background:repeating-linear-gradient(180deg,#d9dfe6 0 1px,transparent 1px 2px)"></div>
<div class="a" style="left:933px;top:212px;width:1px;height:22px;background:repeating-linear-gradient(180deg,#d9dfe6 0 1px,transparent 1px 2px)"></div>
<div class="a" style="left:1043px;top:212px;width:1px;height:22px;background:repeating-linear-gradient(180deg,#d9dfe6 0 1px,transparent 1px 2px)"></div>
<div class="a" style="left:1124px;top:212px;width:1px;height:22px;background:repeating-linear-gradient(180deg,#d9dfe6 0 1px,transparent 1px 2px)"></div>
<div class="t" style="left:25px;top:216.74px;font-size:12px;line-height:12px;transform:scaleX(0.905);color:#fff">Bouwdeel 00113</div>
<div class="t" style="left:226px;top:216.74px;font-size:12px;line-height:12px;transform:scaleX(0.905);color:#fff">19 - Ruimte 19</div>
<div class="t" style="left:413px;top:216.74px;font-size:12px;line-height:12px;transform:scaleX(0.905);color:#fff">Grond</div>
<div class="t" style="left:603px;top:216.74px;font-size:12px;line-height:12px;transform:scaleX(0.905);color:#fff">Vloer - Begane grond</div>
<div class="tr" style="right:288px;top:216.74px;font-size:12px;line-height:12px;transform:scaleX(0.905);color:#fff">33,64</div>
<div class="tr" style="right:178px;top:216.74px;font-size:12px;line-height:12px;transform:scaleX(0.905);color:#fff">0</div>
<div class="tr" style="right:97px;top:216.74px;font-size:12px;line-height:12px;transform:scaleX(0.905);color:#fff">180</div>
<div class="a" style="left:348px;top:216px;width:13px;height:13px;background:#fff;border:1px solid #6a6a6a;border-right-color:#d0d0d0;border-bottom-color:#d0d0d0;box-shadow:inset 1px 1px 0 #c8c8c8"></div>
<div class="a" style="left:558px;top:216px;width:13px;height:13px;background:#fff;border:1px solid #6a6a6a;border-right-color:#d0d0d0;border-bottom-color:#d0d0d0;box-shadow:inset 1px 1px 0 #c8c8c8"></div>
<div class="a" style="left:746px;top:216px;width:13px;height:13px;background:#fff;border:1px solid #6a6a6a;border-right-color:#d0d0d0;border-bottom-color:#d0d0d0;box-shadow:inset 1px 1px 0 #c8c8c8"></div>
<div class="a" style="left:390px;top:212px;width:19px;height:22px;background:linear-gradient(135deg,#fdfdfd,#e6e6e6)"></div>
<svg class="a" style="left:390px;top:214px" width="19" height="20"><g transform="translate(9 10.2) scale(1.15) translate(-9.2 -9.6)"><path d="M2 17 L4 12.5 L6.5 15 Z" fill="#0a90f0"/><path d="M4.8 11.8 L11.5 5.2 L14.8 8.5 L8.2 15.2 Z" fill="#5a5a5a"/><path d="M12.3 4.4 L14.2 2.5 Q15.5 1.8 16.5 2.8 Q17.3 4 16.5 5 L15.6 7.7 Z" fill="#0a90f0"/></g></svg>
<div class="a" style="left:1px;top:235px;width:18px;height:22px;background:linear-gradient(90deg,#f9f9f9,#f1f1f1)"></div>
<div class="a" style="left:1px;top:257px;width:18px;height:1px;background:#a9c3c3"></div>
<div class="a" style="left:20px;top:235px;width:1183px;height:22px;background:#0078d7"></div>
<div class="a" style="left:19px;top:257px;width:1106px;height:1px;background:repeating-linear-gradient(90deg,#d9dfe6 0 1px,transparent 1px 2px)"></div>
<div class="a" style="left:1125px;top:257px;width:78px;height:1px;background:repeating-linear-gradient(90deg,#d9dfe6 0 1px,transparent 1px 2px)"></div>
<div class="a" style="left:19px;top:235px;width:1px;height:22px;background:repeating-linear-gradient(180deg,#d9dfe6 0 1px,transparent 1px 2px)"></div>
<div class="a" style="left:219px;top:235px;width:1px;height:22px;background:repeating-linear-gradient(180deg,#d9dfe6 0 1px,transparent 1px 2px)"></div>
<div class="a" style="left:319px;top:235px;width:1px;height:22px;background:repeating-linear-gradient(180deg,#d9dfe6 0 1px,transparent 1px 2px)"></div>
<div class="a" style="left:389px;top:235px;width:1px;height:22px;background:repeating-linear-gradient(180deg,#d9dfe6 0 1px,transparent 1px 2px)"></div>
<div class="a" style="left:409px;top:235px;width:1px;height:22px;background:repeating-linear-gradient(180deg,#d9dfe6 0 1px,transparent 1px 2px)"></div>
<div class="a" style="left:529px;top:235px;width:1px;height:22px;background:repeating-linear-gradient(180deg,#d9dfe6 0 1px,transparent 1px 2px)"></div>
<div class="a" style="left:599px;top:235px;width:1px;height:22px;background:repeating-linear-gradient(180deg,#d9dfe6 0 1px,transparent 1px 2px)"></div>
<div class="a" style="left:719px;top:235px;width:1px;height:22px;background:repeating-linear-gradient(180deg,#d9dfe6 0 1px,transparent 1px 2px)"></div>
<div class="a" style="left:786px;top:235px;width:1px;height:22px;background:repeating-linear-gradient(180deg,#d9dfe6 0 1px,transparent 1px 2px)"></div>
<div class="a" style="left:933px;top:235px;width:1px;height:22px;background:repeating-linear-gradient(180deg,#d9dfe6 0 1px,transparent 1px 2px)"></div>
<div class="a" style="left:1043px;top:235px;width:1px;height:22px;background:repeating-linear-gradient(180deg,#d9dfe6 0 1px,transparent 1px 2px)"></div>
<div class="a" style="left:1124px;top:235px;width:1px;height:22px;background:repeating-linear-gradient(180deg,#d9dfe6 0 1px,transparent 1px 2px)"></div>
<div class="t" style="left:25px;top:239.74px;font-size:12px;line-height:12px;transform:scaleX(0.905);color:#fff">Bouwdeel 00119</div>
<div class="t" style="left:226px;top:239.74px;font-size:12px;line-height:12px;transform:scaleX(0.905);color:#fff">20 - Ruimte 20</div>
<div class="t" style="left:413px;top:239.74px;font-size:12px;line-height:12px;transform:scaleX(0.905);color:#fff">Grond</div>
<div class="t" style="left:603px;top:239.74px;font-size:12px;line-height:12px;transform:scaleX(0.905);color:#fff">Vloer - Begane grond</div>
<div class="tr" style="right:288px;top:239.74px;font-size:12px;line-height:12px;transform:scaleX(0.905);color:#fff">35,91</div>
<div class="tr" style="right:178px;top:239.74px;font-size:12px;line-height:12px;transform:scaleX(0.905);color:#fff">0</div>
<div class="tr" style="right:97px;top:239.74px;font-size:12px;line-height:12px;transform:scaleX(0.905);color:#fff">180</div>
<div class="a" style="left:348px;top:239px;width:13px;height:13px;background:#fff;border:1px solid #6a6a6a;border-right-color:#d0d0d0;border-bottom-color:#d0d0d0;box-shadow:inset 1px 1px 0 #c8c8c8"></div>
<div class="a" style="left:558px;top:239px;width:13px;height:13px;background:#fff;border:1px solid #6a6a6a;border-right-color:#d0d0d0;border-bottom-color:#d0d0d0;box-shadow:inset 1px 1px 0 #c8c8c8"></div>
<div class="a" style="left:746px;top:239px;width:13px;height:13px;background:#fff;border:1px solid #6a6a6a;border-right-color:#d0d0d0;border-bottom-color:#d0d0d0;box-shadow:inset 1px 1px 0 #c8c8c8"></div>
<div class="a" style="left:390px;top:235px;width:19px;height:22px;background:linear-gradient(135deg,#fdfdfd,#e6e6e6)"></div>
<svg class="a" style="left:390px;top:237px" width="19" height="20"><g transform="translate(9 10.2) scale(1.15) translate(-9.2 -9.6)"><path d="M2 17 L4 12.5 L6.5 15 Z" fill="#0a90f0"/><path d="M4.8 11.8 L11.5 5.2 L14.8 8.5 L8.2 15.2 Z" fill="#5a5a5a"/><path d="M12.3 4.4 L14.2 2.5 Q15.5 1.8 16.5 2.8 Q17.3 4 16.5 5 L15.6 7.7 Z" fill="#0a90f0"/></g></svg>
<div class="a" style="left:1px;top:258px;width:18px;height:22px;background:linear-gradient(90deg,#f9f9f9,#f1f1f1)"></div>
<div class="a" style="left:1px;top:280px;width:18px;height:1px;background:#a9c3c3"></div>
<div class="a" style="left:20px;top:258px;width:1183px;height:22px;background:#0078d7"></div>
<div class="a" style="left:19px;top:280px;width:1106px;height:1px;background:repeating-linear-gradient(90deg,#d9dfe6 0 1px,transparent 1px 2px)"></div>
<div class="a" style="left:1125px;top:280px;width:78px;height:1px;background:repeating-linear-gradient(90deg,#d9dfe6 0 1px,transparent 1px 2px)"></div>
<div class="a" style="left:19px;top:258px;width:1px;height:22px;background:repeating-linear-gradient(180deg,#d9dfe6 0 1px,transparent 1px 2px)"></div>
<div class="a" style="left:219px;top:258px;width:1px;height:22px;background:repeating-linear-gradient(180deg,#d9dfe6 0 1px,transparent 1px 2px)"></div>
<div class="a" style="left:319px;top:258px;width:1px;height:22px;background:repeating-linear-gradient(180deg,#d9dfe6 0 1px,transparent 1px 2px)"></div>
<div class="a" style="left:389px;top:258px;width:1px;height:22px;background:repeating-linear-gradient(180deg,#d9dfe6 0 1px,transparent 1px 2px)"></div>
<div class="a" style="left:409px;top:258px;width:1px;height:22px;background:repeating-linear-gradient(180deg,#d9dfe6 0 1px,transparent 1px 2px)"></div>
<div class="a" style="left:529px;top:258px;width:1px;height:22px;background:repeating-linear-gradient(180deg,#d9dfe6 0 1px,transparent 1px 2px)"></div>
<div class="a" style="left:599px;top:258px;width:1px;height:22px;background:repeating-linear-gradient(180deg,#d9dfe6 0 1px,transparent 1px 2px)"></div>
<div class="a" style="left:719px;top:258px;width:1px;height:22px;background:repeating-linear-gradient(180deg,#d9dfe6 0 1px,transparent 1px 2px)"></div>
<div class="a" style="left:786px;top:258px;width:1px;height:22px;background:repeating-linear-gradient(180deg,#d9dfe6 0 1px,transparent 1px 2px)"></div>
<div class="a" style="left:933px;top:258px;width:1px;height:22px;background:repeating-linear-gradient(180deg,#d9dfe6 0 1px,transparent 1px 2px)"></div>
<div class="a" style="left:1043px;top:258px;width:1px;height:22px;background:repeating-linear-gradient(180deg,#d9dfe6 0 1px,transparent 1px 2px)"></div>
<div class="a" style="left:1124px;top:258px;width:1px;height:22px;background:repeating-linear-gradient(180deg,#d9dfe6 0 1px,transparent 1px 2px)"></div>
<div class="t" style="left:25px;top:262.74px;font-size:12px;line-height:12px;transform:scaleX(0.905);color:#fff">Bouwdeel 00127</div>
<div class="t" style="left:226px;top:262.74px;font-size:12px;line-height:12px;transform:scaleX(0.905);color:#fff">21 - Ruimte 21</div>
<div class="t" style="left:413px;top:262.74px;font-size:12px;line-height:12px;transform:scaleX(0.905);color:#fff">Grond</div>
<div class="t" style="left:603px;top:262.74px;font-size:12px;line-height:12px;transform:scaleX(0.905);color:#fff">Vloer - Begane grond</div>
<div class="tr" style="right:288px;top:262.74px;font-size:12px;line-height:12px;transform:scaleX(0.905);color:#fff">35,91</div>
<div class="tr" style="right:178px;top:262.74px;font-size:12px;line-height:12px;transform:scaleX(0.905);color:#fff">0</div>
<div class="tr" style="right:97px;top:262.74px;font-size:12px;line-height:12px;transform:scaleX(0.905);color:#fff">180</div>
<div class="a" style="left:348px;top:262px;width:13px;height:13px;background:#fff;border:1px solid #6a6a6a;border-right-color:#d0d0d0;border-bottom-color:#d0d0d0;box-shadow:inset 1px 1px 0 #c8c8c8"></div>
<div class="a" style="left:558px;top:262px;width:13px;height:13px;background:#fff;border:1px solid #6a6a6a;border-right-color:#d0d0d0;border-bottom-color:#d0d0d0;box-shadow:inset 1px 1px 0 #c8c8c8"></div>
<div class="a" style="left:746px;top:262px;width:13px;height:13px;background:#fff;border:1px solid #6a6a6a;border-right-color:#d0d0d0;border-bottom-color:#d0d0d0;box-shadow:inset 1px 1px 0 #c8c8c8"></div>
<div class="a" style="left:390px;top:258px;width:19px;height:22px;background:linear-gradient(135deg,#fdfdfd,#e6e6e6)"></div>
<svg class="a" style="left:390px;top:260px" width="19" height="20"><g transform="translate(9 10.2) scale(1.15) translate(-9.2 -9.6)"><path d="M2 17 L4 12.5 L6.5 15 Z" fill="#0a90f0"/><path d="M4.8 11.8 L11.5 5.2 L14.8 8.5 L8.2 15.2 Z" fill="#5a5a5a"/><path d="M12.3 4.4 L14.2 2.5 Q15.5 1.8 16.5 2.8 Q17.3 4 16.5 5 L15.6 7.7 Z" fill="#0a90f0"/></g></svg>
<div class="a" style="left:1px;top:281px;width:18px;height:22px;background:linear-gradient(90deg,#f9f9f9,#f1f1f1)"></div>
<div class="a" style="left:1px;top:303px;width:18px;height:1px;background:#a9c3c3"></div>
<div class="a" style="left:20px;top:281px;width:1183px;height:22px;background:#fff"></div>
<div class="a" style="left:1125px;top:281px;width:78px;height:23px;background:#ececec"></div>
<div class="a" style="left:1125px;top:303px;width:78px;height:1px;background:repeating-linear-gradient(90deg,#c9c9c9 0 1px,transparent 1px 2px)"></div>
<div class="a" style="left:600px;top:281px;width:120px;height:22px;background:#ffff00"></div>
<div class="a" style="left:19px;top:303px;width:1106px;height:1px;background:repeating-linear-gradient(90deg,#c9c9c9 0 1px,transparent 1px 2px)"></div>
<div class="a" style="left:19px;top:281px;width:1px;height:22px;background:repeating-linear-gradient(180deg,#c9c9c9 0 1px,transparent 1px 2px)"></div>
<div class="a" style="left:219px;top:281px;width:1px;height:22px;background:repeating-linear-gradient(180deg,#c9c9c9 0 1px,transparent 1px 2px)"></div>
<div class="a" style="left:319px;top:281px;width:1px;height:22px;background:repeating-linear-gradient(180deg,#c9c9c9 0 1px,transparent 1px 2px)"></div>
<div class="a" style="left:389px;top:281px;width:1px;height:22px;background:repeating-linear-gradient(180deg,#c9c9c9 0 1px,transparent 1px 2px)"></div>
<div class="a" style="left:409px;top:281px;width:1px;height:22px;background:repeating-linear-gradient(180deg,#c9c9c9 0 1px,transparent 1px 2px)"></div>
<div class="a" style="left:529px;top:281px;width:1px;height:22px;background:repeating-linear-gradient(180deg,#c9c9c9 0 1px,transparent 1px 2px)"></div>
<div class="a" style="left:599px;top:281px;width:1px;height:22px;background:repeating-linear-gradient(180deg,#c9c9c9 0 1px,transparent 1px 2px)"></div>
<div class="a" style="left:719px;top:281px;width:1px;height:22px;background:repeating-linear-gradient(180deg,#c9c9c9 0 1px,transparent 1px 2px)"></div>
<div class="a" style="left:786px;top:281px;width:1px;height:22px;background:repeating-linear-gradient(180deg,#c9c9c9 0 1px,transparent 1px 2px)"></div>
<div class="a" style="left:933px;top:281px;width:1px;height:22px;background:repeating-linear-gradient(180deg,#c9c9c9 0 1px,transparent 1px 2px)"></div>
<div class="a" style="left:1043px;top:281px;width:1px;height:22px;background:repeating-linear-gradient(180deg,#c9c9c9 0 1px,transparent 1px 2px)"></div>
<div class="a" style="left:1124px;top:281px;width:1px;height:22px;background:repeating-linear-gradient(180deg,#c9c9c9 0 1px,transparent 1px 2px)"></div>
<div class="t" style="left:25px;top:285.74px;font-size:12px;line-height:12px;transform:scaleX(0.905);color:#000">Bouwdeel 00002</div>
<div class="t" style="left:226px;top:285.74px;font-size:12px;line-height:12px;transform:scaleX(0.905);color:#000">1 - Hal 1</div>
<div class="t" style="left:413px;top:285.74px;font-size:12px;line-height:12px;transform:scaleX(0.905);color:#000">Buitenlucht</div>
<div class="t" style="left:603px;top:285.74px;font-size:12px;line-height:12px;transform:scaleX(0.905);color:#000">Wand - Buiten, HSB (</div>
<div class="tr" style="right:288px;top:285.74px;font-size:12px;line-height:12px;transform:scaleX(0.905);color:#000">9,80</div>
<div class="tr" style="right:178px;top:285.74px;font-size:12px;line-height:12px;transform:scaleX(0.905);color:#000">270</div>
<div class="tr" style="right:97px;top:285.74px;font-size:12px;line-height:12px;transform:scaleX(0.905);color:#000">90</div>
<div class="a" style="left:348px;top:285px;width:13px;height:13px;background:#fff;border:1px solid #6a6a6a;border-right-color:#d0d0d0;border-bottom-color:#d0d0d0;box-shadow:inset 1px 1px 0 #c8c8c8"></div>
<div class="a" style="left:558px;top:285px;width:13px;height:13px;background:#fff;border:1px solid #6a6a6a;border-right-color:#d0d0d0;border-bottom-color:#d0d0d0;box-shadow:inset 1px 1px 0 #c8c8c8"></div>
<div class="a" style="left:746px;top:285px;width:13px;height:13px;background:#fff;border:1px solid #6a6a6a;border-right-color:#d0d0d0;border-bottom-color:#d0d0d0;box-shadow:inset 1px 1px 0 #c8c8c8"></div>
<div class="a" style="left:390px;top:281px;width:19px;height:22px;background:linear-gradient(135deg,#fdfdfd,#e6e6e6)"></div>
<svg class="a" style="left:390px;top:283px" width="19" height="20"><g transform="translate(9 10.2) scale(1.15) translate(-9.2 -9.6)"><path d="M2 17 L4 12.5 L6.5 15 Z" fill="#0a90f0"/><path d="M4.8 11.8 L11.5 5.2 L14.8 8.5 L8.2 15.2 Z" fill="#5a5a5a"/><path d="M12.3 4.4 L14.2 2.5 Q15.5 1.8 16.5 2.8 Q17.3 4 16.5 5 L15.6 7.7 Z" fill="#0a90f0"/></g></svg>
<div class="a" style="left:1px;top:304px;width:18px;height:22px;background:linear-gradient(90deg,#f9f9f9,#f1f1f1)"></div>
<div class="a" style="left:1px;top:326px;width:18px;height:1px;background:#a9c3c3"></div>
<div class="a" style="left:20px;top:304px;width:1183px;height:22px;background:#fff"></div>
<div class="a" style="left:1125px;top:304px;width:78px;height:23px;background:#ececec"></div>
<div class="a" style="left:1125px;top:326px;width:78px;height:1px;background:repeating-linear-gradient(90deg,#c9c9c9 0 1px,transparent 1px 2px)"></div>
<div class="a" style="left:600px;top:304px;width:120px;height:22px;background:#ffff00"></div>
<div class="a" style="left:19px;top:326px;width:1106px;height:1px;background:repeating-linear-gradient(90deg,#c9c9c9 0 1px,transparent 1px 2px)"></div>
<div class="a" style="left:19px;top:304px;width:1px;height:22px;background:repeating-linear-gradient(180deg,#c9c9c9 0 1px,transparent 1px 2px)"></div>
<div class="a" style="left:219px;top:304px;width:1px;height:22px;background:repeating-linear-gradient(180deg,#c9c9c9 0 1px,transparent 1px 2px)"></div>
<div class="a" style="left:319px;top:304px;width:1px;height:22px;background:repeating-linear-gradient(180deg,#c9c9c9 0 1px,transparent 1px 2px)"></div>
<div class="a" style="left:389px;top:304px;width:1px;height:22px;background:repeating-linear-gradient(180deg,#c9c9c9 0 1px,transparent 1px 2px)"></div>
<div class="a" style="left:409px;top:304px;width:1px;height:22px;background:repeating-linear-gradient(180deg,#c9c9c9 0 1px,transparent 1px 2px)"></div>
<div class="a" style="left:529px;top:304px;width:1px;height:22px;background:repeating-linear-gradient(180deg,#c9c9c9 0 1px,transparent 1px 2px)"></div>
<div class="a" style="left:599px;top:304px;width:1px;height:22px;background:repeating-linear-gradient(180deg,#c9c9c9 0 1px,transparent 1px 2px)"></div>
<div class="a" style="left:719px;top:304px;width:1px;height:22px;background:repeating-linear-gradient(180deg,#c9c9c9 0 1px,transparent 1px 2px)"></div>
<div class="a" style="left:786px;top:304px;width:1px;height:22px;background:repeating-linear-gradient(180deg,#c9c9c9 0 1px,transparent 1px 2px)"></div>
<div class="a" style="left:933px;top:304px;width:1px;height:22px;background:repeating-linear-gradient(180deg,#c9c9c9 0 1px,transparent 1px 2px)"></div>
<div class="a" style="left:1043px;top:304px;width:1px;height:22px;background:repeating-linear-gradient(180deg,#c9c9c9 0 1px,transparent 1px 2px)"></div>
<div class="a" style="left:1124px;top:304px;width:1px;height:22px;background:repeating-linear-gradient(180deg,#c9c9c9 0 1px,transparent 1px 2px)"></div>
<div class="t" style="left:25px;top:308.74px;font-size:12px;line-height:12px;transform:scaleX(0.905);color:#000">Bouwdeel 00006</div>
<div class="t" style="left:226px;top:308.74px;font-size:12px;line-height:12px;transform:scaleX(0.905);color:#000">1 - Hal 1</div>
<div class="t" style="left:413px;top:308.74px;font-size:12px;line-height:12px;transform:scaleX(0.905);color:#000">Buitenlucht</div>
<div class="t" style="left:603px;top:308.74px;font-size:12px;line-height:12px;transform:scaleX(0.905);color:#000">Wand - Buiten, HSB (</div>
<div class="tr" style="right:288px;top:308.74px;font-size:12px;line-height:12px;transform:scaleX(0.905);color:#000">9,80</div>
<div class="tr" style="right:178px;top:308.74px;font-size:12px;line-height:12px;transform:scaleX(0.905);color:#000">90</div>
<div class="tr" style="right:97px;top:308.74px;font-size:12px;line-height:12px;transform:scaleX(0.905);color:#000">90</div>
<div class="a" style="left:348px;top:308px;width:13px;height:13px;background:#fff;border:1px solid #6a6a6a;border-right-color:#d0d0d0;border-bottom-color:#d0d0d0;box-shadow:inset 1px 1px 0 #c8c8c8"></div>
<div class="a" style="left:558px;top:308px;width:13px;height:13px;background:#fff;border:1px solid #6a6a6a;border-right-color:#d0d0d0;border-bottom-color:#d0d0d0;box-shadow:inset 1px 1px 0 #c8c8c8"></div>
<div class="a" style="left:746px;top:308px;width:13px;height:13px;background:#fff;border:1px solid #6a6a6a;border-right-color:#d0d0d0;border-bottom-color:#d0d0d0;box-shadow:inset 1px 1px 0 #c8c8c8"></div>
<div class="a" style="left:390px;top:304px;width:19px;height:22px;background:linear-gradient(135deg,#fdfdfd,#e6e6e6)"></div>
<svg class="a" style="left:390px;top:306px" width="19" height="20"><g transform="translate(9 10.2) scale(1.15) translate(-9.2 -9.6)"><path d="M2 17 L4 12.5 L6.5 15 Z" fill="#0a90f0"/><path d="M4.8 11.8 L11.5 5.2 L14.8 8.5 L8.2 15.2 Z" fill="#5a5a5a"/><path d="M12.3 4.4 L14.2 2.5 Q15.5 1.8 16.5 2.8 Q17.3 4 16.5 5 L15.6 7.7 Z" fill="#0a90f0"/></g></svg>
<svg class="a" style="left:6px;top:264px" width="8" height="11"><path d="M1 0.5 L6.5 5.5 L1 10.5 Z" fill="#000"/></svg>
<div class="a" style="left:20px;top:258px;width:1183px;height:1px;background:repeating-linear-gradient(90deg,#000 0 1px,#ff8c00 1px 2px)"></div>
<div class="a" style="left:20px;top:279px;width:1183px;height:1px;background:repeating-linear-gradient(90deg,#000 0 1px,#ff8c00 1px 2px)"></div>
<div class="a" style="left:20px;top:258px;width:1px;height:22px;background:repeating-linear-gradient(180deg,#000 0 1px,#ff8c00 1px 2px)"></div>
<div class="a" style="left:0px;top:324px;width:1203px;height:17px;background:#e8e8e8;border-top:1px solid #f8f8f8"></div>
<div class="a" style="left:1px;top:325px;width:17px;height:15px;background:#f0f0f0;border-right:1px solid #888;border-bottom:1px solid #888"></div>
<svg class="a" style="left:6px;top:328px" width="6" height="9"><path d="M5 0 L0 4.5 L5 9 Z" fill="#000"/></svg>
<div class="a" style="left:18px;top:325px;width:1020px;height:15px;background:#f0f0f0;border-right:1px solid #888;border-bottom:1px solid #888"></div>
<div class="a" style="left:1185px;top:325px;width:17px;height:15px;background:#f0f0f0;border-right:1px solid #888;border-bottom:1px solid #888"></div>
<svg class="a" style="left:1191px;top:328px" width="6" height="9"><path d="M0 0 L5 4.5 L0 9 Z" fill="#000"/></svg>
<div class="a" style="left:1203px;top:50px;width:16px;height:274px;background:#e8e8e8"></div>
<div class="a" style="left:1203px;top:50px;width:15px;height:17px;background:#f0f0f0;border-right:1px solid #888;border-bottom:1px solid #888"></div>
<svg class="a" style="left:1206px;top:55px" width="9" height="6"><path d="M0 5 L4.5 0 L9 5 Z" fill="#000"/></svg>
<div class="a" style="left:1203px;top:68px;width:15px;height:8px;background:#f0f0f0;border-right:1px solid #888;border-bottom:1px solid #888"></div>
<div class="a" style="left:1203px;top:306px;width:15px;height:18px;background:#f0f0f0;border-right:1px solid #888;border-bottom:1px solid #888"></div>
<svg class="a" style="left:1206px;top:313px" width="9" height="6"><path d="M0 0 L9 0 L4.5 5 Z" fill="#000"/></svg>
<div class="a" style="left:1203px;top:324px;width:16px;height:17px;background:#f0f0f0"></div>
<div class="a" style="left:0px;top:49px;width:1219px;height:1px;background:#a0a0a0"></div>
<div class="a" style="left:0px;top:49px;width:1px;height:292px;background:#a0a0a0"></div>
<div class="a" style="left:0px;top:340px;width:1219px;height:1px;background:#666666"></div>
<div class="a" style="left:123px;top:52px;width:108px;height:22px;background:#ffffe1;border:1px solid #d0d0c0;border-right:1px solid #000;border-bottom:1px solid #000"></div>
<div class="t" style="left:127px;top:57.14px;font-size:12px;line-height:12px;transform:scaleX(0.98);">Wijzig op selectie</div>
<svg class="a" style="left:123.7px;top:35.2px" width="14" height="21"><path d="M0.5 0.5 L0.5 16.3 L4.2 12.8 L6.8 18.6 L9.3 17.6 L6.8 11.9 L11.8 11.9 Z" fill="#fff" stroke="#000" stroke-width="1" stroke-linejoin="miter"/></svg>
<div class="a" style="left:0px;top:341px;width:1219px;height:4px;background:#fbfbfb"></div>
<div class="a" style="left:0px;top:345px;width:1219px;height:2px;background:#7a7a7a"></div>
<div class="a" style="left:0px;top:347px;width:1219px;height:18px;background:linear-gradient(#b2c8e4,#d4e0f0 60%,#e2ebf8)"></div>
<div class="t" style="left:2px;top:349.34px;font-size:12px;line-height:12px;transform:scaleX(0.905);color:#6d6d6d">Geometry</div>
<svg class="a" style="left:1160px;top:348px" width="59" height="16">
<path d="M8 7.5 L16.5 7.5 L12.25 11.5 Z" fill="#444"/>
<path d="M27.5 5.5 H33.5 M28.5 5.5 V10.5 H32.5 V5.5 M26.5 10.5 H34.5 M30.5 10.5 V14" fill="none" stroke="#444" stroke-width="1.3"/>
<path d="M45.5 4.5 L52.5 11.5 M52.5 4.5 L45.5 11.5" stroke="#444" stroke-width="2"/>
</svg>
<div class="a" style="left:0px;top:365px;width:1219px;height:29px;background:#f0f0f0"></div>
<div class="a" style="left:0px;top:366px;width:661px;height:27px;background:#f5f5f5"></div>
<div class="a" style="left:0px;top:393px;width:1219px;height:1px;background:#a0a0a0"></div>
<div class="a" style="left:0;top:394px;width:1219px;height:5px;background:linear-gradient(90deg,#b7e1fe 0px,#b0defe 100px,#a4d9fe 200px,#93d3fe 300px,#80cbfe 400px,#71c5fe 500px,#6bc3fe 600px,#71c5fe 700px,#7fcbfe 800px,#92d2fe 900px,#a3d9fe 1000px,#b0defe 1100px,#b7e1fe 1200px)"></div>
<div class="a" style="left:0;top:399px;width:1219px;height:5px;background:linear-gradient(90deg,#b8e1fe 0px,#b1defe 100px,#a5dafe 200px,#94d3fe 300px,#82ccfe 400px,#72c6fe 500px,#6cc3fe 600px,#72c6fe 700px,#81cbfe 800px,#93d3fe 900px,#a5d9fe 1000px,#b1defe 1100px,#b8e1fe 1200px)"></div>
<div class="a" style="left:0;top:404px;width:1219px;height:5px;background:linear-gradient(90deg,#bae2fe 0px,#b2dffe 100px,#a6dafe 200px,#95d3fe 300px,#83ccfe 400px,#74c6fe 500px,#6ec4fe 600px,#74c6fe 700px,#82ccfe 800px,#95d3fe 900px,#a6dafe 1000px,#b2dffe 1100px,#b9e1fe 1200px)"></div>
<div class="a" style="left:0;top:409px;width:1219px;height:5px;background:linear-gradient(90deg,#bbe2fe 0px,#b3dffe 100px,#a7dafe 200px,#97d4fe 300px,#84cdfe 400px,#76c7fe 500px,#70c5fe 600px,#75c7fe 700px,#84ccfe 800px,#96d4fe 900px,#a7dafe 1000px,#b3dffe 1100px,#bae2fe 1200px)"></div>
<div class="a" style="left:0;top:414px;width:1219px;height:5px;background:linear-gradient(90deg,#bce2fe 0px,#b5dffe 100px,#a9dbfe 200px,#98d4fe 300px,#86cdfe 400px,#77c7fe 500px,#71c5fe 600px,#77c7fe 700px,#85cdfe 800px,#97d4fe 900px,#a8dbfe 1000px,#b4dffe 1100px,#bbe2fe 1200px)"></div>
<div class="a" style="left:0;top:419px;width:1219px;height:5px;background:linear-gradient(90deg,#bde3fe 0px,#b6e0fe 100px,#aadbfe 200px,#99d5fe 300px,#87cefe 400px,#79c8fe 500px,#73c6fe 600px,#78c8fe 700px,#87cdfe 800px,#99d5fe 900px,#a9dbfe 1000px,#b5e0fe 1100px,#bce2fe 1200px)"></div>
<div class="a" style="left:0;top:424px;width:1219px;height:5px;background:linear-gradient(90deg,#bee3fe 0px,#b7e0fe 100px,#abdcfe 200px,#9bd5fe 300px,#89cefe 400px,#7ac9fe 500px,#75c6fe 600px,#7ac8fe 700px,#88cefe 800px,#9ad5fe 900px,#aadbfe 1000px,#b6e0fe 1100px,#bde3fe 1200px)"></div>
<div class="a" style="left:0;top:429px;width:1219px;height:5px;background:linear-gradient(90deg,#bfe3fe 0px,#b8e1fe 100px,#acdcfe 200px,#9cd6fe 300px,#8acffe 400px,#7cc9fe 500px,#76c7fe 600px,#7cc9fe 700px,#8acffe 800px,#9cd6fe 900px,#acdcfe 1000px,#b7e0fe 1100px,#bfe3fe 1200px)"></div>
<div class="a" style="left:0;top:434px;width:1219px;height:5px;background:linear-gradient(90deg,#c0e4fe 0px,#b9e1fe 100px,#aeddfe 200px,#9ed6fe 300px,#8ccffe 400px,#7ecafe 500px,#78c8fe 600px,#7dcafe 700px,#8bcffe 800px,#9dd6fe 900px,#addcfe 1000px,#b9e1fe 1100px,#c0e4fe 1200px)"></div>
<div class="a" style="left:0;top:439px;width:1219px;height:5px;background:linear-gradient(90deg,#c1e4fe 0px,#bae1fe 100px,#afddfe 200px,#9fd7fe 300px,#8ed0fe 400px,#80cbfe 500px,#7ac8fe 600px,#7fcafe 700px,#8dd0fe 800px,#9ed7fe 900px,#aeddfe 1000px,#bae1fe 1100px,#c1e4fe 1200px)"></div>
<div class="a" style="left:0;top:444px;width:1219px;height:5px;background:linear-gradient(90deg,#c2e4fe 0px,#bbe2fe 100px,#b0ddfe 200px,#a0d7fe 300px,#8fd1fe 400px,#81cbfe 500px,#7cc9fe 600px,#81cbfe 700px,#8fd0fe 800px,#a0d7fe 900px,#afddfe 1000px,#bbe2fe 1100px,#c2e4fe 1200px)"></div>
<div class="a" style="left:0;top:449px;width:1219px;height:5px;background:linear-gradient(90deg,#c3e5fe 0px,#bce2fe 100px,#b1defe 200px,#a2d8fe 300px,#91d1fe 400px,#83ccfe 500px,#7ecafe 600px,#83ccfe 700px,#90d1fe 800px,#a1d8fe 900px,#b1defe 1000px,#bce2fe 1100px,#c3e5fe 1200px)"></div>
<div class="a" style="left:0;top:454px;width:1219px;height:5px;background:linear-gradient(90deg,#c4e5fe 0px,#bde3fe 100px,#b2defe 200px,#a3d8fe 300px,#93d2fe 400px,#85cdfe 500px,#80cafe 600px,#85ccfe 700px,#92d2fe 800px,#a3d8fe 900px,#b2defe 1000px,#bde2fe 1100px,#c4e5fe 1200px)"></div>
<div class="a" style="left:0;top:459px;width:1219px;height:5px;background:linear-gradient(90deg,#c5e5fe 0px,#bfe3fe 100px,#b4dffe 200px,#a5d9fe 300px,#94d2fe 400px,#87cdfe 500px,#82cbfe 600px,#87cdfe 700px,#94d2fe 800px,#a4d9fe 900px,#b3dffe 1000px,#bee3fe 1100px,#c5e5fe 1200px)"></div>
<div class="a" style="left:0;top:464px;width:1219px;height:5px;background:linear-gradient(90deg,#c6e6fe 0px,#c0e3fe 100px,#b5dffe 200px,#a6d9fe 300px,#96d3fe 400px,#89cefe 500px,#84ccfe 600px,#89cefe 700px,#95d3fe 800px,#a6d9fe 900px,#b5dffe 1000px,#bfe3fe 1100px,#c6e6fe 1200px)"></div>
<div class="a" style="left:0;top:469px;width:1219px;height:5px;background:linear-gradient(90deg,#c7e6fe 0px,#c1e4fe 100px,#b6e0fe 200px,#a8dafe 300px,#98d4fe 400px,#8bcffe 500px,#86cdfe 600px,#8acffe 700px,#97d4fe 800px,#a7dafe 900px,#b6dffe 1000px,#c0e4fe 1100px,#c7e6fe 1200px)"></div>
<div class="a" style="left:0;top:474px;width:1219px;height:5px;background:linear-gradient(90deg,#c8e7fe 0px,#c2e4fe 100px,#b8e0fe 200px,#a9dbfe 300px,#9ad4fe 400px,#8dcffe 500px,#88cdfe 600px,#8ccffe 700px,#99d4fe 800px,#a9dafe 900px,#b7e0fe 1000px,#c1e4fe 1100px,#c8e6fe 1200px)"></div>
<div class="a" style="left:0;top:479px;width:1219px;height:5px;background:linear-gradient(90deg,#c9e7fe 0px,#c3e5fe 100px,#b9e1fe 200px,#abdbfe 300px,#9bd5fe 400px,#8fd0fe 500px,#8acefe 600px,#8ed0fe 700px,#9bd5fe 800px,#aadbfe 900px,#b8e0fe 1000px,#c3e4fe 1100px,#c9e7fe 1200px)"></div>
<div class="a" style="left:0;top:484px;width:1219px;height:5px;background:linear-gradient(90deg,#cae7fe 0px,#c4e5fe 100px,#bae1fe 200px,#acdcfe 300px,#9dd6fe 400px,#91d1fe 500px,#8ccffe 600px,#90d1fe 700px,#9dd6fe 800px,#acdbfe 900px,#bae1fe 1000px,#c4e5fe 1100px,#cae7fe 1200px)"></div>
<div class="a" style="left:0;top:489px;width:1219px;height:5px;background:linear-gradient(90deg,#cbe8fe 0px,#c5e5fe 100px,#bbe2fe 200px,#aedcfe 300px,#9fd6fe 400px,#93d2fe 500px,#8ed0fe 600px,#92d2fe 700px,#9ed6fe 800px,#addcfe 900px,#bbe1fe 1000px,#c5e5fe 1100px,#cbe8fe 1200px)"></div>
<div class="a" style="left:0;top:494px;width:1219px;height:5px;background:linear-gradient(90deg,#cce8fe 0px,#c6e6fe 100px,#bde2fe 200px,#afddfe 300px,#a1d7fe 400px,#95d2fe 500px,#90d1fe 600px,#94d2fe 700px,#a0d7fe 800px,#afddfe 900px,#bce2fe 1000px,#c6e6fe 1100px,#cce8fe 1200px)"></div>
<div class="a" style="left:0;top:499px;width:1219px;height:5px;background:linear-gradient(90deg,#cde8fe 0px,#c7e6fe 100px,#bee3fe 200px,#b1ddfe 300px,#a2d8fe 400px,#97d3fe 500px,#92d1fe 600px,#97d3fe 700px,#a2d8fe 800px,#b0ddfe 900px,#bde2fe 1000px,#c7e6fe 1100px,#cde8fe 1200px)"></div>
<div class="a" style="left:0;top:504px;width:1219px;height:5px;background:linear-gradient(90deg,#cee9fe 0px,#c8e7fe 100px,#bfe3fe 200px,#b2defe 300px,#a4d9fe 400px,#99d4fe 500px,#94d2fe 600px,#99d4fe 700px,#a4d8fe 800px,#b2defe 900px,#bfe3fe 1000px,#c8e7fe 1100px,#cee9fe 1200px)"></div>
<div class="a" style="left:0;top:509px;width:1219px;height:5px;background:linear-gradient(90deg,#cfe9fe 0px,#cae7fe 100px,#c1e4fe 200px,#b4dffe 300px,#a6d9fe 400px,#9bd5fe 500px,#97d3fe 600px,#9bd5fe 700px,#a6d9fe 800px,#b3defe 900px,#c0e3fe 1000px,#c9e7fe 1100px,#cfe9fe 1200px)"></div>
<div class="a" style="left:0;top:514px;width:1219px;height:5px;background:linear-gradient(90deg,#d0e9fe 0px,#cbe7fe 100px,#c2e4fe 200px,#b6dffe 300px,#a8dafe 400px,#9dd6fe 500px,#99d4fe 600px,#9dd6fe 700px,#a7dafe 800px,#b5dffe 900px,#c1e4fe 1000px,#cae7fe 1100px,#d0e9fe 1200px)"></div>
<div class="a" style="left:0;top:519px;width:1219px;height:5px;background:linear-gradient(90deg,#d1eafe 0px,#cce8fe 100px,#c3e4fe 200px,#b7e0fe 300px,#aadbfe 400px,#9fd6fe 500px,#9bd5fe 600px,#9fd6fe 700px,#a9dafe 800px,#b7e0fe 900px,#c3e4fe 1000px,#cbe8fe 1100px,#d1eafe 1200px)"></div>
<div class="a" style="left:0;top:524px;width:1219px;height:5px;background:linear-gradient(90deg,#d2eafe 0px,#cde8fe 100px,#c4e5fe 200px,#b9e0fe 300px,#acdbfe 400px,#a1d7fe 500px,#9dd6fe 600px,#a1d7fe 700px,#abdbfe 800px,#b8e0fe 900px,#c4e5fe 1000px,#cde8fe 1100px,#d2eafe 1200px)"></div>
<div class="a" style="left:0;top:529px;width:1219px;height:5px;background:linear-gradient(90deg,#d3ebfe 0px,#cee9fe 100px,#c6e5fe 200px,#bae1fe 300px,#addcfe 400px,#a3d8fe 500px,#9fd6fe 600px,#a3d8fe 700px,#addcfe 800px,#bae1fe 900px,#c5e5fe 1000px,#cee9fe 1100px,#d3ebfe 1200px)"></div>
<div class="a" style="left:0;top:534px;width:1219px;height:5px;background:linear-gradient(90deg,#d4ebfe 0px,#cfe9fe 100px,#c7e6fe 200px,#bce2fe 300px,#afddfe 400px,#a5d9fe 500px,#a1d7fe 600px,#a5d9fe 700px,#afddfe 800px,#bbe1fe 900px,#c6e6fe 1000px,#cfe9fe 1100px,#d4ebfe 1200px)"></div>
<div class="a" style="left:0;top:539px;width:1219px;height:5px;background:linear-gradient(90deg,#d5ebfe 0px,#d0eafe 100px,#c8e6fe 200px,#bde2fe 300px,#b1ddfe 400px,#a7dafe 500px,#a4d8fe 600px,#a7dafe 700px,#b1ddfe 800px,#bde2fe 900px,#c8e6fe 1000px,#d0e9fe 1100px,#d5ebfe 1200px)"></div>
<div class="a" style="left:0;top:544px;width:1219px;height:5px;background:linear-gradient(90deg,#d6ecfe 0px,#d1eafe 100px,#c9e7fe 200px,#bfe3fe 300px,#b3defe 400px,#a9dafe 500px,#a6d9fe 600px,#a9dafe 700px,#b3defe 800px,#bee3fe 900px,#c9e7fe 1000px,#d1eafe 1100px,#d5ecfe 1200px)"></div>
<div class="a" style="left:0;top:549px;width:1219px;height:5px;background:linear-gradient(90deg,#d7ecfe 0px,#d2eafe 100px,#cbe7fe 200px,#c0e3fe 300px,#b5dffe 400px,#acdbfe 500px,#a8dafe 600px,#abdbfe 700px,#b4dffe 800px,#c0e3fe 900px,#cae7fe 1000px,#d2eafe 1100px,#d6ecfe 1200px)"></div>
<div class="a" style="left:0;top:554px;width:1219px;height:5px;background:linear-gradient(90deg,#d7ecfe 0px,#d3ebfe 100px,#cce8fe 200px,#c2e4fe 300px,#b7e0fe 400px,#aedcfe 500px,#aadbfe 600px,#addcfe 700px,#b6dffe 800px,#c1e4fe 900px,#cce8fe 1000px,#d3ebfe 1100px,#d7ecfe 1200px)"></div>
<div class="a" style="left:0;top:559px;width:1219px;height:5px;background:linear-gradient(90deg,#d8edfe 0px,#d4ebfe 100px,#cde8fe 200px,#c3e5fe 300px,#b8e0fe 400px,#b0ddfe 500px,#acdcfe 600px,#afddfe 700px,#b8e0fe 800px,#c3e4fe 900px,#cde8fe 1000px,#d4ebfe 1100px,#d8edfe 1200px)"></div>
<div class="a" style="left:0;top:564px;width:1219px;height:5px;background:linear-gradient(90deg,#d9edfe 0px,#d5ecfe 100px,#cee9fe 200px,#c5e5fe 300px,#bae1fe 400px,#b2defe 500px,#aedcfe 600px,#b1defe 700px,#bae1fe 800px,#c4e5fe 900px,#cee9fe 1000px,#d5ecfe 1100px,#d9edfe 1200px)"></div>
<div class="a" style="left:0;top:569px;width:1219px;height:5px;background:linear-gradient(90deg,#daeefe 0px,#d6ecfe 100px,#d0e9fe 200px,#c6e6fe 300px,#bce2fe 400px,#b4dffe 500px,#b0ddfe 600px,#b3defe 700px,#bce2fe 800px,#c6e6fe 900px,#cfe9fe 1000px,#d6ecfe 1100px,#daeefe 1200px)"></div>
<div class="a" style="left:0;top:574px;width:1219px;height:5px;background:linear-gradient(90deg,#dbeefe 0px,#d7ecfe 100px,#d1eafe 200px,#c8e6fe 300px,#bee2fe 400px,#b6dffe 500px,#b2defe 600px,#b5dffe 700px,#bde2fe 800px,#c7e6fe 900px,#d0eafe 1000px,#d7ecfe 1100px,#dbeefe 1200px)"></div>
<div class="a" style="left:0;top:579px;width:1219px;height:5px;background:linear-gradient(90deg,#dceefe 0px,#d8edfe 100px,#d2eafe 200px,#c9e7fe 300px,#c0e3fe 400px,#b8e0fe 500px,#b5dffe 600px,#b7e0fe 700px,#bfe3fe 800px,#c9e7fe 900px,#d2eafe 1000px,#d8edfe 1100px,#dceefe 1200px)"></div>
<div class="a" style="left:0;top:584px;width:1219px;height:5px;background:linear-gradient(90deg,#ddeffe 0px,#d9edfe 100px,#d3ebfe 200px,#cbe8fe 300px,#c1e4fe 400px,#bae1fe 500px,#b7e0fe 600px,#b9e1fe 700px,#c1e4fe 800px,#cae7fe 900px,#d3ebfe 1000px,#d9edfe 1100px,#ddeffe 1200px)"></div>
<div class="a" style="left:0;top:589px;width:1219px;height:5px;background:linear-gradient(90deg,#deeffe 0px,#daeefe 100px,#d4ebfe 200px,#cce8fe 300px,#c3e5fe 400px,#bce2fe 500px,#b9e1fe 600px,#bbe2fe 700px,#c3e4fe 800px,#cce8fe 900px,#d4ebfe 1000px,#daeefe 1100px,#deeffe 1200px)"></div>
<div class="a" style="left:0;top:594px;width:1219px;height:5px;background:linear-gradient(90deg,#dfeffe 0px,#dbeefe 100px,#d6ecfe 200px,#cee9fe 300px,#c5e5fe 400px,#bee3fe 500px,#bbe1fe 600px,#bde2fe 700px,#c4e5fe 800px,#cde9fe 900px,#d5ecfe 1000px,#dbeefe 1100px,#dfeffe 1200px)"></div>
<div class="a" style="left:0;top:599px;width:1219px;height:5px;background:linear-gradient(90deg,#e0f0fe 0px,#dceffe 100px,#d7ecfe 200px,#cfe9fe 300px,#c6e6fe 400px,#c0e3fe 500px,#bde2fe 600px,#bfe3fe 700px,#c6e6fe 800px,#cfe9fe 900px,#d6ecfe 1000px,#dceefe 1100px,#e0f0fe 1200px)"></div>
<div class="a" style="left:0;top:604px;width:1219px;height:5px;background:linear-gradient(90deg,#e1f0fe 0px,#ddeffe 100px,#d8edfe 200px,#d0eafe 300px,#c8e7fe 400px,#c1e4fe 500px,#bfe3fe 600px,#c1e4fe 700px,#c8e7fe 800px,#d0eafe 900px,#d8edfe 1000px,#ddeffe 1100px,#e0f0fe 1200px)"></div>
<div class="a" style="left:0;top:609px;width:1219px;height:5px;background:linear-gradient(90deg,#e1f1fe 0px,#deeffe 100px,#d9edfe 200px,#d2ebfe 300px,#cae7fe 400px,#c3e5fe 500px,#c1e4fe 600px,#c3e5fe 700px,#cae7fe 800px,#d2eafe 900px,#d9edfe 1000px,#deeffe 1100px,#e1f1fe 1200px)"></div>
<div class="a" style="left:0;top:614px;width:1219px;height:5px;background:linear-gradient(90deg,#e2f1fe 0px,#dff0fe 100px,#daeefe 200px,#d3ebfe 300px,#cbe8fe 400px,#c5e6fe 500px,#c3e5fe 600px,#c5e6fe 700px,#cbe8fe 800px,#d3ebfe 900px,#daeefe 1000px,#dff0fe 1100px,#e2f1fe 1200px)"></div>
<div class="a" style="left:0;top:619px;width:1219px;height:5px;background:linear-gradient(90deg,#e3f1fe 0px,#e0f0fe 100px,#dbeefe 200px,#d5ecfe 300px,#cde9fe 400px,#c7e6fe 500px,#c5e5fe 600px,#c7e6fe 700px,#cde9fe 800px,#d4ecfe 900px,#dbeefe 1000px,#e0f0fe 1100px,#e3f1fe 1200px)"></div>
<div class="a" style="left:0;top:624px;width:1219px;height:5px;background:linear-gradient(90deg,#e4f2fe 0px,#e1f1fe 100px,#dceffe 200px,#d6ecfe 300px,#cfe9fe 400px,#c9e7fe 500px,#c7e6fe 600px,#c9e7fe 700px,#cee9fe 800px,#d6ecfe 900px,#dceffe 1000px,#e1f1fe 1100px,#e4f2fe 1200px)"></div>
<div class="a" style="left:0;top:629px;width:1219px;height:5px;background:linear-gradient(90deg,#e5f2fe 0px,#e2f1fe 100px,#deeffe 200px,#d7edfe 300px,#d0eafe 400px,#cbe8fe 500px,#c8e7fe 600px,#cbe8fe 700px,#d0eafe 800px,#d7edfe 900px,#ddeffe 1000px,#e2f1fe 1100px,#e5f2fe 1200px)"></div>
<div class="a" style="left:0;top:634px;width:1219px;height:5px;background:linear-gradient(90deg,#e6f2fe 0px,#e3f1fe 100px,#dff0fe 200px,#d9edfe 300px,#d2ebfe 400px,#cce9fe 500px,#cae8fe 600px,#cce9fe 700px,#d2ebfe 800px,#d8edfe 900px,#def0fe 1000px,#e3f1fe 1100px,#e6f2fe 1200px)"></div>
<div class="a" style="left:0;top:639px;width:1219px;height:5px;background:linear-gradient(90deg,#e6f3fe 0px,#e4f2fe 100px,#e0f0fe 200px,#daeefe 300px,#d3ebfe 400px,#cee9fe 500px,#cce9fe 600px,#cee9fe 700px,#d3ebfe 800px,#daeefe 900px,#e0f0fe 1000px,#e4f2fe 1100px,#e6f3fe 1200px)"></div>
<div class="a" style="left:0;top:644px;width:1219px;height:5px;background:linear-gradient(90deg,#e7f3fe 0px,#e5f2fe 100px,#e1f1fe 200px,#dbeefe 300px,#d5ecfe 400px,#d0eafe 500px,#cee9fe 600px,#d0eafe 700px,#d5ecfe 800px,#dbeefe 900px,#e1f1fe 1000px,#e5f2fe 1100px,#e7f3fe 1200px)"></div>
<div class="a" style="left:0;top:649px;width:1219px;height:5px;background:linear-gradient(90deg,#e8f4fe 0px,#e6f3fe 100px,#e2f1fe 200px,#dceffe 300px,#d6edfe 400px,#d2ebfe 500px,#d0eafe 600px,#d2ebfe 700px,#d6edfe 800px,#dceffe 900px,#e2f1fe 1000px,#e6f3fe 1100px,#e8f4fe 1200px)"></div>
<div class="a" style="left:0;top:654px;width:1219px;height:5px;background:linear-gradient(90deg,#e9f4fe 0px,#e7f3fe 100px,#e3f2fe 200px,#def0fe 300px,#d8edfe 400px,#d3ebfe 500px,#d1ebfe 600px,#d3ebfe 700px,#d8edfe 800px,#deeffe 900px,#e3f2fe 1000px,#e7f3fe 1100px,#e9f4fe 1200px)"></div>
<div class="a" style="left:0;top:659px;width:1219px;height:5px;background:linear-gradient(90deg,#eaf4fe 0px,#e8f3fe 100px,#e4f2fe 200px,#dff0fe 300px,#d9eefe 400px,#d5ecfe 500px,#d3ebfe 600px,#d5ecfe 700px,#d9eefe 800px,#dff0fe 900px,#e4f2fe 1000px,#e7f3fe 1100px,#eaf4fe 1200px)"></div>
<div class="a" style="left:0;top:664px;width:1219px;height:5px;background:linear-gradient(90deg,#ebf5fe 0px,#e8f4fe 100px,#e5f3fe 200px,#e0f1fe 300px,#dbeffe 400px,#d7edfe 500px,#d5ecfe 600px,#d6edfe 700px,#dbeefe 800px,#e0f1fe 900px,#e5f2fe 1000px,#e8f4fe 1100px,#eaf5fe 1200px)"></div>
<div class="a" style="left:0;top:669px;width:1219px;height:5px;background:linear-gradient(90deg,#ebf5fe 0px,#e9f4fe 100px,#e6f3fe 200px,#e1f1fe 300px,#dceffe 400px,#d8eefe 500px,#d7edfe 600px,#d8eefe 700px,#dceffe 800px,#e1f1fe 900px,#e6f3fe 1000px,#e9f4fe 1100px,#ebf5fe 1200px)"></div>
<div class="a" style="left:0;top:674px;width:1219px;height:5px;background:linear-gradient(90deg,#ecf5fe 0px,#eaf5fe 100px,#e7f3fe 200px,#e3f2fe 300px,#def0fe 400px,#daeefe 500px,#d8eefe 600px,#daeefe 700px,#def0fe 800px,#e2f2fe 900px,#e7f3fe 1000px,#eaf5fe 1100px,#ecf5fe 1200px)"></div>
<div class="a" style="left:0;top:679px;width:1219px;height:5px;background:linear-gradient(90deg,#edf6fe 0px,#ebf5fe 100px,#e8f4fe 200px,#e4f2fe 300px,#dff0fe 400px,#dbeffe 500px,#daeefe 600px,#dbeffe 700px,#dff0fe 800px,#e4f2fe 900px,#e8f4fe 1000px,#ebf5fe 1100px,#edf6fe 1200px)"></div>
<div class="a" style="left:0;top:684px;width:1219px;height:5px;background:linear-gradient(90deg,#eef6fe 0px,#ecf5fe 100px,#e9f4fe 200px,#e5f3fe 300px,#e0f1fe 400px,#ddf0fe 500px,#dbeffe 600px,#ddf0fe 700px,#e0f1fe 800px,#e5f3fe 900px,#e9f4fe 1000px,#ecf5fe 1100px,#eef6fe 1200px)"></div>
<div class="a" style="left:0;top:689px;width:1219px;height:5px;background:linear-gradient(90deg,#eef6fe 0px,#edf6fe 100px,#eaf5fe 200px,#e6f3fe 300px,#e2f2fe 400px,#def0fe 500px,#ddf0fe 600px,#def0fe 700px,#e2f1fe 800px,#e6f3fe 900px,#eaf5fe 1000px,#edf6fe 1100px,#eef6fe 1200px)"></div>
<div class="a" style="left:0;top:694px;width:1219px;height:5px;background:linear-gradient(90deg,#eff7fe 0px,#eef6fe 100px,#ebf5fe 200px,#e7f4fe 300px,#e3f2fe 400px,#e0f1fe 500px,#def0fe 600px,#e0f1fe 700px,#e3f2fe 800px,#e7f4fe 900px,#ebf5fe 1000px,#edf6fe 1100px,#eff7fe 1200px)"></div>
<div class="a" style="left:0;top:699px;width:1219px;height:5px;background:linear-gradient(90deg,#f0f7fe 0px,#eef7fe 100px,#ecf6fe 200px,#e8f4fe 300px,#e4f3fe 400px,#e1f1fe 500px,#e0f1fe 600px,#e1f1fe 700px,#e4f3fe 800px,#e8f4fe 900px,#ecf6fe 1000px,#eef7fe 1100px,#f0f7fe 1200px)"></div>
<div class="a" style="left:0;top:704px;width:1219px;height:5px;background:linear-gradient(90deg,#f1f8fe 0px,#eff7fe 100px,#edf6fe 200px,#e9f5fe 300px,#e6f3fe 400px,#e3f2fe 500px,#e1f2fe 600px,#e2f2fe 700px,#e5f3fe 800px,#e9f5fe 900px,#edf6fe 1000px,#eff7fe 1100px,#f1f8fe 1200px)"></div>
<div class="a" style="left:0;top:709px;width:1219px;height:5px;background:linear-gradient(90deg,#f1f8fe 0px,#f0f7fe 100px,#eef6fe 200px,#eaf5fe 300px,#e7f4fe 400px,#e4f3fe 500px,#e3f2fe 600px,#e4f3fe 700px,#e7f4fe 800px,#eaf5fe 900px,#eef6fe 1000px,#f0f7fe 1100px,#f1f8fe 1200px)"></div>
<div class="a" style="left:0;top:714px;width:1219px;height:5px;background:linear-gradient(90deg,#f2f8fe 0px,#f1f8fe 100px,#eff7fe 200px,#ebf6fe 300px,#e8f4fe 400px,#e5f3fe 500px,#e4f3fe 600px,#e5f3fe 700px,#e8f4fe 800px,#ebf6fe 900px,#eef7fe 1000px,#f1f8fe 1100px,#f2f8fe 1200px)"></div>
<div class="a" style="left:0;top:719px;width:1219px;height:1px;background:linear-gradient(90deg,#f3f9fe 0px,#f2f8fe 100px,#eff7fe 200px,#ecf6fe 300px,#e9f5fe 400px,#e7f4fe 500px,#e6f3fe 600px,#e7f4fe 700px,#e9f5fe 800px,#ecf6fe 900px,#eff7fe 1000px,#f1f8fe 1100px,#f3f9fe 1200px)"></div>
<div class="a" style="left:0px;top:394px;width:1px;height:326px;background:#a0a0a0"></div>
<div class="a" style="left:1px;top:394px;width:1px;height:326px;background:#696969"></div>
<div class="a" style="left:0px;top:394px;width:1219px;height:1px;background:#696969"></div>
<div class="a" style="left:2px;top:719px;width:1217px;height:1px;background:#e3e3e3"></div>
<div class="a" style="left:1217px;top:394px;width:2px;height:326px;background:#e2e0de"></div>
<svg class="a" style="left:0;top:395px" width="1219" height="325"><line x1="0" y1="168.5" x2="267.5" y2="224.5" stroke="#1a6a1a" stroke-width="1.1"/><line x1="264" y1="232" x2="214" y2="325" stroke="#800000" stroke-width="1"/><line x1="267.3" y1="224" x2="220" y2="325" stroke="#000080" stroke-width="1"/><line x1="424" y1="256" x2="745" y2="325" stroke="#66dd22" stroke-width="1"/><line x1="424" y1="256" x2="745" y2="325" stroke="#f0a800" stroke-width="1" stroke-dasharray="3 3"/><polygon points="267.3,223.9 309.3,141.7 513.0,205.0 588.4,165.6 707.0,220.0 573.3,263.3 460.0,235.4 424.4,256.1" fill="#006a90" /><polyline points="267.3,223.9 424.4,256.1" fill="none" stroke="#e0a040" stroke-width="1" stroke-dasharray="2 2"/><polygon points="309.3,141.7 513.0,205.0 556.9,-115.8 466.8,-199.4" fill="#d0d000" /><polygon points="513.0,205.0 588.4,165.6 597.7,-162.1 556.2,-110.5" fill="#ffff00" /><polygon points="588.4,165.6 707.0,220.0 679.2,-1.0 591.4,-1.0" fill="#d0d000" /><polygon points="339.4,134.5 418.0,160.6 423.5,141.6 348.0,114.1" fill="#3c4c88" /><polygon points="397.3,153.7 418.0,160.6 421.0,150.0 406.9,145.1" fill="#3a8c8c" /><polygon points="442.3,173.4 465.7,181.0 470.6,157.4 448.3,149.2" fill="#3a8c8c" /><polygon points="445.7,159.6 468.5,167.6 470.6,157.4 448.3,149.2" fill="#3c4c88" /><polygon points="462.2,179.9 465.7,181.0 468.1,169.6 464.6,168.5" fill="#4a9a9a" /><polygon points="485.3,187.4 505.7,194.0 509.0,171.5 489.5,164.3" fill="#3a8c8c" /><polygon points="487.7,174.3 507.6,181.2 509.0,171.5 489.5,164.3" fill="#3c4c88" /><polygon points="502.6,193.0 505.7,194.0 507.3,183.2 504.2,182.1" fill="#4a9a9a" /><polygon points="518.3,196.0 526.7,191.5 529.7,166.8 521.5,171.7" fill="#3a8c8c" /><polygon points="523.9,170.2 529.7,166.8 528.4,177.6 521.5,171.7" fill="#3c4c88" /><polygon points="536.0,182.9 551.1,174.6 552.9,152.8 538.2,161.6" fill="#3a8c8c" /><polygon points="542.5,159.0 552.9,152.8 552.1,162.4 538.2,161.6" fill="#3c4c88" /><polygon points="563.4,168.7 579.9,159.6 581.0,134.7 565.0,144.4" fill="#3a8c8c" /><polygon points="569.7,141.6 581.0,134.7 580.5,145.7 565.0,144.4" fill="#3c4c88" /><polygon points="598.7,158.3 633.4,174.9 632.6,154.8 599.0,137.6" fill="#3a8c8c" /><polygon points="599.0,137.6 632.6,154.8 632.6,154.8 611.3,164.3 598.7,158.3" fill="#3c4c88" /><polygon points="649.0,183.6 664.9,191.2 662.9,169.2 647.6,161.3" fill="#3a8c8c" /><polygon points="647.6,161.3 662.9,169.2 662.9,169.2 654.7,186.3 649.0,183.6" fill="#3c4c88" /><polygon points="675.7,196.4 697.1,206.6 694.6,188.0 673.7,177.4" fill="#80c850" /><polygon points="685.6,201.1 695.7,196.2 697.1,206.6" fill="#30b0c0" /><polygon points="673.7,177.4 694.6,188.0 694.6,188.0 683.4,200.0 675.7,196.4" fill="#3c4c88" /><polygon points="358.1,90.0 430.0,118.8 434.8,102.0 365.6,72.3" fill="#3c4c88" /><polygon points="414.8,112.7 430.0,118.8 432.0,111.7 421.7,107.4" fill="#3a8c8c" /><polygon points="452.5,132.1 474.2,140.6 478.6,119.6 457.7,110.7" fill="#3a8c8c" /><polygon points="453.8,126.7 475.3,135.4 478.6,119.6 457.7,110.7" fill="#3c4c88" /><polygon points="470.9,139.3 474.2,140.6 476.3,130.5 473.1,129.2" fill="#4a9a9a" /><polygon points="492.5,147.9 511.4,155.3 514.4,135.1 496.2,127.2" fill="#3a8c8c" /><polygon points="493.4,142.7 512.2,150.3 514.4,135.1 496.2,127.2" fill="#3c4c88" /><polygon points="508.5,154.2 511.4,155.3 512.9,145.6 510.0,144.4" fill="#4a9a9a" /><polygon points="523.4,157.0 531.4,151.9 534.1,130.0 526.2,135.4" fill="#3a8c8c" /><polygon points="527.8,134.3 534.1,130.0 532.8,140.4 525.5,140.7" fill="#3c4c88" /><polygon points="540.2,143.2 554.5,133.9 556.2,114.8 542.2,124.4" fill="#3a8c8c" /><polygon points="544.9,122.5 556.2,114.8 555.4,123.9 541.7,129.0" fill="#3c4c88" /><polygon points="566.1,127.2 581.7,117.2 582.6,95.5 567.6,105.9" fill="#3a8c8c" /><polygon points="570.5,103.8 582.6,95.5 582.2,105.8 567.2,111.1" fill="#3c4c88" /><polygon points="599.4,115.9 631.8,133.7 631.1,116.1 599.7,98.0" fill="#3a8c8c" /><polygon points="599.7,98.0 631.1,116.1 631.1,117.0 613.6,123.7 599.4,115.9" fill="#3c4c88" /><polygon points="646.3,142.8 661.3,151.0 659.6,131.6 645.1,123.2" fill="#3a8c8c" /><polygon points="645.1,123.2 659.6,131.6 659.7,132.6 652.8,146.3 646.3,142.8" fill="#3c4c88" /><polygon points="671.5,156.5 691.8,167.6 689.5,151.2 669.8,139.8" fill="#80c850" /><polygon points="680.8,161.6 690.5,158.5 691.8,167.6" fill="#30b0c0" /><polygon points="669.8,139.8 689.5,151.2 689.6,152.0 680.3,161.3 671.5,156.5" fill="#3c4c88" /><polygon points="374.4,51.2 440.6,81.9 444.9,67.0 380.9,35.7" fill="#3c4c88" /><polygon points="430.1,77.1 440.6,81.9 441.9,77.4 434.7,74.0" fill="#3a8c8c" /><polygon points="461.5,95.4 481.7,104.7 485.6,85.9 466.2,76.4" fill="#3a8c8c" /><polygon points="462.3,92.0 482.4,101.3 485.6,85.9 466.2,76.4" fill="#3c4c88" /><polygon points="478.7,103.3 481.7,104.7 483.6,95.6 480.6,94.2" fill="#4a9a9a" /><polygon points="498.8,112.5 516.6,120.7 519.3,102.5 502.1,94.0" fill="#3a8c8c" /><polygon points="499.4,109.2 517.1,117.4 519.3,102.5 502.1,94.0" fill="#3c4c88" /><polygon points="513.9,119.4 516.6,120.7 517.9,111.9 515.2,110.6" fill="#4a9a9a" /><polygon points="527.9,122.3 535.6,116.8 538.0,97.2 530.5,102.9" fill="#3a8c8c" /><polygon points="531.2,102.4 538.0,97.2 536.8,107.1 529.2,112.5" fill="#3c4c88" /><polygon points="544.0,108.0 557.6,98.1 559.0,81.0 545.8,91.2" fill="#3a8c8c" /><polygon points="547.0,90.2 559.0,81.0 558.3,89.7 544.9,99.5" fill="#3c4c88" /><polygon points="568.6,90.7 583.2,80.1 584.0,60.9 569.8,71.8" fill="#3a8c8c" /><polygon points="571.2,70.8 584.0,60.9 583.6,70.6 569.2,81.1" fill="#3c4c88" /><polygon points="600.0,79.1 630.3,97.6 629.7,82.2 600.2,63.4" fill="#3a8c8c" /><polygon points="600.2,63.4 629.7,82.2 629.7,83.7 615.5,88.6 600.0,79.1" fill="#3c4c88" /><polygon points="644.0,106.9 658.1,115.5 656.6,98.4 642.9,89.7" fill="#3a8c8c" /><polygon points="642.9,89.7 656.6,98.4 656.8,100.1 651.2,111.3 644.0,106.9" fill="#3c4c88" /><polygon points="667.8,121.4 687.0,133.1 685.0,118.5 666.2,106.6" fill="#80c850" /><polygon points="676.6,126.8 685.9,125.0 687.0,133.1" fill="#30b0c0" /><polygon points="666.2,106.6 685.0,118.5 685.2,119.9 677.6,127.4 667.8,121.4" fill="#3c4c88" /><polygon points="388.7,17.2 450.0,49.1 453.8,35.8 394.5,3.4" fill="#3c4c88" /><polygon points="442.7,45.3 450.0,49.1 450.8,46.4 445.7,43.7" fill="#3a8c8c" /><polygon points="469.6,62.7 488.5,72.5 492.0,55.6 473.8,45.6" fill="#3a8c8c" /><polygon points="470.2,60.3 489.0,70.1 492.0,55.6 473.8,45.6" fill="#3c4c88" /><polygon points="485.6,71.0 488.5,72.5 490.2,64.4 487.4,62.9" fill="#4a9a9a" /><polygon points="504.5,80.8 521.3,89.4 523.7,72.9 507.5,64.1" fill="#3a8c8c" /><polygon points="504.9,78.4 521.6,87.0 523.7,72.9 507.5,64.1" fill="#3c4c88" /><polygon points="518.7,88.1 521.3,89.4 522.5,81.5 519.9,80.2" fill="#4a9a9a" /><polygon points="532.0,91.2 539.4,85.3 541.5,67.7 534.3,73.7" fill="#3a8c8c" /><polygon points="534.3,73.7 541.5,67.7 540.3,77.3 532.6,86.7" fill="#3c4c88" /><polygon points="547.3,76.6 560.3,66.2 561.6,50.9 548.9,61.5" fill="#3a8c8c" /><polygon points="548.9,61.5 561.6,50.9 560.9,59.2 547.7,72.7" fill="#3c4c88" /><polygon points="570.7,58.4 584.6,47.3 585.3,30.3 571.9,41.5" fill="#3a8c8c" /><polygon points="571.9,41.5 585.3,30.3 584.9,39.5 571.0,54.1" fill="#3c4c88" /><polygon points="600.5,46.9 629.0,65.8 628.5,52.1 600.7,33.1" fill="#3a8c8c" /><polygon points="600.7,33.1 628.5,52.1 628.5,54.1 617.2,58.0 600.5,46.9" fill="#3c4c88" /><polygon points="642.0,75.2 655.3,84.1 654.0,68.8 641.0,59.9" fill="#3a8c8c" /><polygon points="641.0,59.9 654.0,68.8 654.2,71.1 649.7,80.4 642.0,75.2" fill="#3c4c88" /><polygon points="664.5,90.2 682.8,102.3 681.0,89.2 663.1,76.9" fill="#80c850" /><polygon points="672.9,95.7 681.8,95.0 682.8,102.3" fill="#30b0c0" /><polygon points="663.1,76.9 681.0,89.2 681.3,91.1 675.2,97.2 664.5,90.2" fill="#3c4c88" /><polygon points="401.4,-13.0 458.4,19.7 461.9,7.7 406.5,-25.2" fill="#3c4c88" /><polygon points="453.9,17.1 458.4,19.7 458.9,18.2 455.7,16.4" fill="#3a8c8c" /><polygon points="476.8,33.4 494.5,43.5 497.7,28.2 480.6,18.0" fill="#3a8c8c" /><polygon points="477.2,31.7 494.9,41.8 497.7,28.2 480.6,18.0" fill="#3c4c88" /><polygon points="491.9,42.0 494.5,43.5 496.1,36.1 493.4,34.6" fill="#4a9a9a" /><polygon points="509.7,52.1 525.5,61.1 527.7,46.1 512.4,37.0" fill="#3a8c8c" /><polygon points="510.0,50.5 525.7,59.5 527.7,46.1 512.4,37.0" fill="#3c4c88" /><polygon points="523.1,59.7 525.5,61.1 526.6,53.9 524.2,52.5" fill="#4a9a9a" /><polygon points="535.7,63.1 542.7,57.1 544.6,41.2 537.7,47.3" fill="#3a8c8c" /><polygon points="537.7,47.3 544.6,41.2 543.6,49.8 536.2,59.1" fill="#3c4c88" /><polygon points="550.3,48.3 562.7,37.6 563.9,23.9 551.8,34.8" fill="#3a8c8c" /><polygon points="551.8,34.8 563.9,23.9 563.3,31.3 550.7,44.9" fill="#3c4c88" /><polygon points="572.7,29.5 585.8,18.1 586.5,2.9 573.7,14.4" fill="#3a8c8c" /><polygon points="573.7,14.4 586.5,2.9 586.1,11.2 572.9,25.7" fill="#3c4c88" /><polygon points="601.0,18.4 627.9,37.5 627.4,25.3 601.2,6.2" fill="#3a8c8c" /><polygon points="601.2,6.2 627.4,25.3 627.5,27.7 618.7,31.0 601.0,18.4" fill="#3c4c88" /><polygon points="640.1,47.0 652.8,56.0 651.6,42.3 639.2,33.3" fill="#3a8c8c" /><polygon points="639.2,33.3 651.6,42.3 651.8,45.0 648.4,52.9 640.1,47.0" fill="#3c4c88" /><polygon points="661.6,62.2 679.0,74.6 677.4,62.8 660.3,50.3" fill="#80c850" /><polygon points="669.6,67.9 678.1,68.1 679.0,74.6" fill="#30b0c0" /><polygon points="660.3,50.3 677.4,62.8 677.7,65.1 673.0,70.4 661.6,62.2" fill="#3c4c88" /><polygon points="412.7,-40.0 466.0,-6.8 469.2,-17.6 417.3,-50.9" fill="#3c4c88" /><polygon points="461.8,-9.4 466.0,-6.8 466.4,-8.1 463.5,-9.9" fill="#3a8c8c" /><polygon points="483.3,6.9 500.1,17.2 503.0,3.3 486.8,-7.1" fill="#3a8c8c" /><polygon points="483.6,5.6 500.3,16.0 503.0,3.3 486.8,-7.1" fill="#3c4c88" /><polygon points="497.5,15.7 500.1,17.2 501.5,10.6 499.0,9.0" fill="#4a9a9a" /><polygon points="514.3,26.1 529.4,35.3 531.4,21.7 516.8,12.3" fill="#3a8c8c" /><polygon points="514.6,24.8 529.5,34.1 531.4,21.7 516.8,12.3" fill="#3c4c88" /><polygon points="527.1,33.9 529.4,35.3 530.3,28.8 528.1,27.3" fill="#4a9a9a" /><polygon points="539.0,37.7 545.8,31.5 547.5,17.0 540.9,23.3" fill="#3a8c8c" /><polygon points="540.9,23.3 547.5,17.0 546.6,24.9 539.5,34.0" fill="#3c4c88" /><polygon points="553.1,22.8 564.9,11.9 566.0,-0.5 554.4,10.5" fill="#3a8c8c" /><polygon points="554.4,10.5 566.0,-0.5 565.4,6.2 553.4,19.7" fill="#3c4c88" /><polygon points="574.4,3.6 586.9,-8.0 587.5,-21.6 575.3,-10.0" fill="#3a8c8c" /><polygon points="575.3,-10.0 587.5,-21.6 587.2,-14.2 574.6,0.1" fill="#3c4c88" /><polygon points="601.4,-6.9 626.8,12.3 626.4,1.3 601.5,-17.9" fill="#3a8c8c" /><polygon points="601.5,-17.9 626.4,1.3 626.5,3.5 618.2,5.8 601.4,-6.9" fill="#3c4c88" /><polygon points="638.5,21.7 650.6,30.8 649.5,18.5 637.7,9.4" fill="#3a8c8c" /><polygon points="637.7,9.4 649.5,18.5 649.7,20.9 646.4,27.7 638.5,21.7" fill="#3c4c88" /><polygon points="658.9,37.1 675.6,49.6 674.1,38.9 657.8,26.3" fill="#80c850" /><polygon points="666.5,42.8 674.8,43.7 675.6,49.6" fill="#30b0c0" /><polygon points="657.8,26.3 674.1,38.9 674.4,41.0 669.9,45.3 658.9,37.1" fill="#3c4c88" /><polygon points="422.9,-64.1 472.9,-30.7 475.7,-40.5 427.0,-74.0" fill="#3c4c88" /><polygon points="468.9,-33.4 472.9,-30.7 473.3,-31.9 470.5,-33.8" fill="#3a8c8c" /><polygon points="489.2,-17.2 505.1,-6.7 507.7,-19.3 492.4,-29.9" fill="#3a8c8c" /><polygon points="489.5,-18.3 505.3,-7.8 507.7,-19.3 492.4,-29.9" fill="#3c4c88" /><polygon points="502.7,-8.3 505.1,-6.7 506.3,-12.7 504.0,-14.3" fill="#4a9a9a" /><polygon points="518.6,2.3 532.9,11.8 534.7,-0.8 520.9,-10.3" fill="#3a8c8c" /><polygon points="518.8,1.2 533.0,10.7 534.7,-0.8 520.9,-10.3" fill="#3c4c88" /><polygon points="530.7,10.3 532.9,11.8 533.8,5.8 531.6,4.3" fill="#4a9a9a" /><polygon points="542.0,14.6 548.6,8.2 550.1,-5.0 543.7,1.4" fill="#3a8c8c" /><polygon points="543.7,1.4 550.1,-5.0 549.3,2.2 542.5,11.2" fill="#3c4c88" /><polygon points="555.5,-0.3 566.9,-11.4 567.8,-22.7 556.7,-11.5" fill="#3a8c8c" /><polygon points="556.7,-11.5 567.8,-22.7 567.3,-16.5 555.8,-3.2" fill="#3c4c88" /><polygon points="575.9,-19.8 587.9,-31.5 588.4,-43.8 576.8,-32.2" fill="#3a8c8c" /><polygon points="576.8,-32.2 588.4,-43.8 588.1,-37.1 576.2,-23.0" fill="#3c4c88" /><polygon points="601.7,-29.6 625.9,-10.5 625.5,-20.4 601.9,-39.4" fill="#3a8c8c" /><polygon points="601.9,-39.4 625.5,-20.4 625.6,-18.4 617.7,-17.0 601.7,-29.6" fill="#3c4c88" /><polygon points="637.0,-1.1 648.5,8.0 647.5,-3.2 636.3,-12.3" fill="#3a8c8c" /><polygon points="636.3,-12.3 647.5,-3.2 647.7,-1.0 644.6,4.9 637.0,-1.1" fill="#3c4c88" /><polygon points="656.5,14.3 672.5,27.0 671.2,17.2 655.5,4.6" fill="#80c850" /><polygon points="663.8,20.1 671.8,21.5 672.5,27.0" fill="#30b0c0" /><polygon points="655.5,4.6 671.2,17.2 671.4,19.1 667.0,22.6 656.5,14.3" fill="#3c4c88" /><polygon points="432.1,-85.9 479.2,-52.5 481.7,-61.5 435.8,-94.9" fill="#3c4c88" /><polygon points="475.4,-55.2 479.2,-52.5 479.5,-53.6 476.9,-55.5" fill="#3a8c8c" /><polygon points="494.6,-39.1 509.6,-28.5 512.1,-40.1 497.5,-50.7" fill="#3a8c8c" /><polygon points="494.9,-40.1 509.9,-29.5 512.1,-40.1 497.5,-50.7" fill="#3c4c88" /><polygon points="507.4,-30.1 509.6,-28.5 510.8,-34.1 508.6,-35.7" fill="#4a9a9a" /><polygon points="522.5,-19.4 536.1,-9.8 537.8,-21.4 524.6,-31.0" fill="#3a8c8c" /><polygon points="522.7,-20.4 536.2,-10.9 537.8,-21.4 524.6,-31.0" fill="#3c4c88" /><polygon points="534.0,-11.3 536.1,-9.8 536.9,-15.4 534.9,-16.8" fill="#4a9a9a" /><polygon points="544.8,-6.6 551.1,-13.0 552.5,-25.1 546.4,-18.7" fill="#3a8c8c" /><polygon points="546.4,-18.7 552.5,-25.1 551.7,-18.5 545.2,-9.7" fill="#3c4c88" /><polygon points="557.8,-21.4 568.7,-32.6 569.6,-42.8 558.9,-31.7" fill="#3a8c8c" /><polygon points="558.9,-31.7 569.6,-42.8 569.1,-37.3 558.1,-24.0" fill="#3c4c88" /><polygon points="577.4,-41.1 588.8,-52.7 589.3,-64.0 578.1,-52.3" fill="#3a8c8c" /><polygon points="578.1,-52.3 589.3,-64.0 589.0,-57.8 577.6,-43.9" fill="#3c4c88" /><polygon points="602.1,-50.0 625.1,-31.0 624.7,-40.0 602.2,-58.9" fill="#3a8c8c" /><polygon points="602.2,-58.9 624.7,-40.0 624.8,-38.2 617.2,-37.5 602.1,-50.0" fill="#3c4c88" /><polygon points="635.7,-21.7 646.7,-12.6 645.8,-22.8 635.0,-31.9" fill="#3a8c8c" /><polygon points="635.0,-31.9 645.8,-22.8 646.0,-20.8 642.9,-15.8 635.7,-21.7" fill="#3c4c88" /><polygon points="654.3,-6.4 669.7,6.3 668.4,-2.6 653.4,-15.3" fill="#80c850" /><polygon points="661.3,-0.6 669.0,1.3 669.7,6.3" fill="#30b0c0" /><polygon points="653.4,-15.3 668.4,-2.6 668.7,-0.9 664.4,1.9 654.3,-6.4" fill="#3c4c88" /><polygon points="440.4,-105.7 484.9,-72.4 487.2,-80.6 443.8,-113.9" fill="#3c4c88" /><polygon points="481.3,-75.1 484.9,-72.4 485.2,-73.4 482.7,-75.3" fill="#3a8c8c" /><polygon points="499.6,-59.1 513.8,-48.5 516.1,-59.2 502.2,-69.8" fill="#3a8c8c" /><polygon points="499.8,-60.1 514.0,-49.5 516.1,-59.2 502.2,-69.8" fill="#3c4c88" /><polygon points="511.7,-50.1 513.8,-48.5 514.9,-53.6 512.8,-55.2" fill="#4a9a9a" /><polygon points="526.1,-39.4 539.1,-29.7 540.7,-40.4 528.0,-50.0" fill="#3a8c8c" /><polygon points="526.3,-40.3 539.2,-30.7 540.7,-40.4 528.0,-50.0" fill="#3c4c88" /><polygon points="537.1,-31.2 539.1,-29.7 539.8,-34.8 537.9,-36.3" fill="#4a9a9a" /><polygon points="547.3,-26.0 553.4,-32.5 554.7,-43.6 548.8,-37.1" fill="#3a8c8c" /><polygon points="548.8,-37.1 554.7,-43.6 554.0,-37.5 547.7,-28.9" fill="#3c4c88" /><polygon points="559.8,-40.8 570.3,-51.9 571.1,-61.3 560.8,-50.2" fill="#3a8c8c" /><polygon points="560.8,-50.2 571.1,-61.3 570.7,-56.2 560.1,-43.2" fill="#3c4c88" /><polygon points="578.7,-60.4 589.6,-72.1 590.0,-82.3 579.3,-70.7" fill="#3a8c8c" /><polygon points="579.3,-70.7 590.0,-82.3 589.8,-76.7 578.8,-63.1" fill="#3c4c88" /><polygon points="602.4,-68.5 624.3,-49.7 624.0,-57.9 602.5,-76.6" fill="#3a8c8c" /><polygon points="602.5,-76.6 624.0,-57.9 624.0,-56.3 616.8,-56.1 602.4,-68.5" fill="#3c4c88" /><polygon points="634.4,-40.5 645.0,-31.5 644.2,-40.8 633.8,-49.8" fill="#3a8c8c" /><polygon points="633.8,-49.8 644.2,-40.8 644.3,-39.0 641.3,-34.6 634.4,-40.5" fill="#3c4c88" /><polygon points="652.3,-25.2 667.1,-12.6 666.0,-20.8 651.5,-33.4" fill="#80c850" /><polygon points="659.1,-19.5 666.5,-17.2 667.1,-12.6" fill="#30b0c0" /><polygon points="651.5,-33.4 666.0,-20.8 666.2,-19.2 662.0,-17.0 652.3,-25.2" fill="#3c4c88" /><polygon points="447.9,-123.8 490.1,-90.6 492.3,-98.2 451.1,-131.2" fill="#3c4c88" /><polygon points="486.7,-93.3 490.1,-90.6 490.4,-91.6 488.0,-93.4" fill="#3a8c8c" /><polygon points="504.1,-77.6 517.7,-66.9 519.8,-76.8 506.5,-87.4" fill="#3a8c8c" /><polygon points="504.3,-78.4 517.9,-67.8 519.8,-76.8 506.5,-87.4" fill="#3c4c88" /><polygon points="515.6,-68.5 517.7,-66.9 518.7,-71.7 516.7,-73.3" fill="#4a9a9a" /><polygon points="529.4,-57.8 541.8,-48.1 543.3,-58.0 531.2,-67.6" fill="#3a8c8c" /><polygon points="529.6,-58.7 541.9,-49.0 543.3,-58.0 531.2,-67.6" fill="#3c4c88" /><polygon points="539.9,-49.6 541.8,-48.1 542.5,-52.8 540.6,-54.3" fill="#4a9a9a" /><polygon points="549.7,-43.9 555.5,-50.4 556.8,-60.6 551.0,-54.2" fill="#3a8c8c" /><polygon points="551.0,-54.2 556.8,-60.6 556.1,-55.0 550.0,-46.5" fill="#3c4c88" /><polygon points="561.7,-58.5 571.8,-69.7 572.6,-78.3 562.7,-67.2" fill="#3a8c8c" /><polygon points="562.7,-67.2 572.6,-78.3 572.2,-73.6 562.0,-60.7" fill="#3c4c88" /><polygon points="579.8,-78.2 590.3,-89.7 590.7,-99.1 580.5,-87.6" fill="#3a8c8c" /><polygon points="580.5,-87.6 590.7,-99.1 590.5,-94.0 580.0,-80.6" fill="#3c4c88" /><polygon points="602.6,-85.3 623.6,-66.7 623.3,-74.3 602.8,-92.7" fill="#3a8c8c" /><polygon points="602.8,-92.7 623.3,-74.3 623.4,-72.8 616.4,-73.1 602.6,-85.3" fill="#3c4c88" /><polygon points="633.3,-57.7 643.5,-48.8 642.7,-57.3 632.8,-66.2" fill="#3a8c8c" /><polygon points="632.8,-66.2 642.7,-57.3 642.8,-55.6 639.9,-51.9 633.3,-57.7" fill="#3c4c88" /><polygon points="650.5,-42.6 664.7,-30.0 663.7,-37.5 649.7,-50.0" fill="#80c850" /><polygon points="657.0,-36.8 664.1,-34.2 664.7,-30.0" fill="#30b0c0" /><polygon points="649.7,-50.0 663.7,-37.5 663.9,-36.1 659.8,-34.3 650.5,-42.6" fill="#3c4c88" /><polygon points="454.9,-140.3 494.9,-107.4 496.9,-114.4 457.7,-147.1" fill="#3c4c88" /><polygon points="491.7,-110.1 494.9,-107.4 495.2,-108.3 492.9,-110.1" fill="#3a8c8c" /><polygon points="508.3,-94.6 521.3,-83.9 523.2,-93.1 510.5,-103.7" fill="#3a8c8c" /><polygon points="508.5,-95.4 521.4,-84.8 523.2,-93.1 510.5,-103.7" fill="#3c4c88" /><polygon points="519.3,-85.6 521.3,-83.9 522.2,-88.3 520.2,-89.9" fill="#4a9a9a" /><polygon points="532.5,-74.8 544.4,-65.1 545.7,-74.3 534.1,-84.0" fill="#3a8c8c" /><polygon points="532.6,-75.6 544.5,-65.9 545.7,-74.3 534.1,-84.0" fill="#3c4c88" /><polygon points="542.5,-66.6 544.4,-65.1 545.0,-69.5 543.2,-71.0" fill="#4a9a9a" /><polygon points="551.8,-60.5 557.5,-66.9 558.6,-76.4 553.1,-70.0" fill="#3a8c8c" /><polygon points="553.1,-70.0 558.6,-76.4 558.0,-71.2 552.2,-62.9" fill="#3c4c88" /><polygon points="563.5,-74.9 573.2,-86.0 573.9,-94.0 564.3,-82.9" fill="#3a8c8c" /><polygon points="564.3,-82.9 573.9,-94.0 573.5,-89.6 563.7,-76.9" fill="#3c4c88" /><polygon points="580.9,-94.5 591.0,-105.9 591.4,-114.5 581.5,-103.2" fill="#3a8c8c" /><polygon points="581.5,-103.2 591.4,-114.5 591.2,-109.8 581.1,-96.7" fill="#3c4c88" /><polygon points="602.9,-100.6 623.0,-82.4 622.7,-89.3 603.0,-107.4" fill="#3a8c8c" /><polygon points="603.0,-107.4 622.7,-89.3 622.8,-87.9 616.1,-88.6 602.9,-100.6" fill="#3c4c88" /><polygon points="632.3,-73.5 642.0,-64.6 641.3,-72.5 631.8,-81.3" fill="#3a8c8c" /><polygon points="631.8,-81.3 641.3,-72.5 641.5,-71.0 638.7,-67.7 632.3,-73.5" fill="#3c4c88" /><polygon points="648.8,-58.5 662.5,-46.0 661.5,-53.0 648.1,-65.4" fill="#80c850" /><polygon points="655.0,-52.8 662.0,-49.9 662.5,-46.0" fill="#30b0c0" /><polygon points="648.1,-65.4 661.5,-53.0 661.7,-51.6 657.8,-50.3 648.8,-58.5" fill="#3c4c88" /><polygon points="461.2,-155.4 499.4,-122.9 501.2,-129.4 463.9,-161.7" fill="#3c4c88" /><polygon points="496.3,-125.6 499.4,-122.9 499.6,-123.7 497.5,-125.6" fill="#3a8c8c" /><polygon points="512.2,-110.3 524.6,-99.7 526.4,-108.2 514.2,-118.7" fill="#3a8c8c" /><polygon points="512.3,-111.0 524.7,-100.5 526.4,-108.2 514.2,-118.7" fill="#3c4c88" /><polygon points="522.7,-101.3 524.6,-99.7 525.4,-103.8 523.6,-105.4" fill="#4a9a9a" /><polygon points="535.3,-90.6 546.7,-80.9 548.0,-89.5 536.9,-99.1" fill="#3a8c8c" /><polygon points="535.5,-91.4 546.8,-81.7 548.0,-89.5 536.9,-99.1" fill="#3c4c88" /><polygon points="545.0,-82.4 546.7,-80.9 547.3,-85.0 545.6,-86.5" fill="#4a9a9a" /><polygon points="553.8,-75.8 559.3,-82.2 560.4,-91.0 555.0,-84.6" fill="#3a8c8c" /><polygon points="555.0,-84.6 560.4,-91.0 559.8,-86.2 554.1,-78.0" fill="#3c4c88" /><polygon points="565.1,-90.1 574.5,-101.0 575.1,-108.4 565.9,-97.5" fill="#3a8c8c" /><polygon points="565.9,-97.5 575.1,-108.4 574.8,-104.4 565.3,-92.0" fill="#3c4c88" /><polygon points="581.9,-109.5 591.6,-120.8 592.0,-128.8 582.5,-117.5" fill="#3a8c8c" /><polygon points="582.5,-117.5 592.0,-128.8 591.8,-124.4 582.1,-111.5" fill="#3c4c88" /><polygon points="603.1,-114.7 622.4,-96.7 622.1,-103.1 603.2,-121.0" fill="#3a8c8c" /><polygon points="603.2,-121.0 622.1,-103.1 622.2,-101.9 615.8,-102.9 603.1,-114.7" fill="#3c4c88" /><polygon points="631.3,-88.0 640.7,-79.3 640.1,-86.6 630.9,-95.2" fill="#3a8c8c" /><polygon points="630.9,-95.2 640.1,-86.6 640.2,-85.1 637.5,-82.3 631.3,-88.0" fill="#3c4c88" /><polygon points="647.2,-73.2 660.5,-60.9 659.6,-67.3 646.6,-79.6" fill="#80c850" /><polygon points="653.3,-67.6 660.0,-64.4 660.5,-60.9" fill="#30b0c0" /><polygon points="646.6,-79.6 659.6,-67.3 659.8,-66.0 655.9,-65.1 647.2,-73.2" fill="#3c4c88" /><polygon points="467.1,-169.4 503.5,-137.3 505.2,-143.3 469.6,-175.2" fill="#3c4c88" /><polygon points="500.6,-139.9 503.5,-137.3 503.7,-138.0 501.7,-139.8" fill="#3a8c8c" /><polygon points="515.7,-124.8 527.7,-114.4 529.3,-122.2 517.7,-132.7" fill="#3a8c8c" /><polygon points="515.9,-125.5 527.8,-115.1 529.3,-122.2 517.7,-132.7" fill="#3c4c88" /><polygon points="525.8,-116.0 527.7,-114.4 528.5,-118.1 526.7,-119.7" fill="#4a9a9a" /><polygon points="538.0,-105.3 548.9,-95.7 550.1,-103.6 539.4,-113.2" fill="#3a8c8c" /><polygon points="538.1,-106.0 549.0,-96.4 550.1,-103.6 539.4,-113.2" fill="#3c4c88" /><polygon points="547.2,-97.2 548.9,-95.7 549.5,-99.5 547.8,-101.0" fill="#4a9a9a" /><polygon points="555.7,-90.0 561.0,-96.4 562.0,-104.6 556.8,-98.2" fill="#3a8c8c" /><polygon points="556.8,-98.2 562.0,-104.6 561.5,-100.1 556.0,-92.1" fill="#3c4c88" /><polygon points="566.6,-104.1 575.7,-115.0 576.3,-121.9 567.3,-111.0" fill="#3a8c8c" /><polygon points="567.3,-111.0 576.3,-121.9 575.9,-118.1 566.8,-105.9" fill="#3c4c88" /><polygon points="582.9,-123.4 592.2,-134.6 592.5,-141.9 583.4,-130.8" fill="#3a8c8c" /><polygon points="583.4,-130.8 592.5,-141.9 592.3,-137.9 583.0,-125.3" fill="#3c4c88" /><polygon points="603.3,-127.7 621.9,-110.0 621.6,-115.9 603.4,-133.4" fill="#3a8c8c" /><polygon points="603.4,-133.4 621.6,-115.9 621.7,-114.7 615.5,-116.1 603.3,-127.7" fill="#3c4c88" /><polygon points="630.5,-101.4 639.5,-92.8 638.9,-99.6 630.0,-108.1" fill="#3a8c8c" /><polygon points="630.0,-108.1 638.9,-99.6 639.0,-98.2 636.4,-95.8 630.5,-101.4" fill="#3c4c88" /><polygon points="645.8,-86.8 658.6,-74.6 657.8,-80.6 645.2,-92.7" fill="#80c850" /><polygon points="651.6,-81.2 658.1,-77.9 658.6,-74.6" fill="#30b0c0" /><polygon points="645.2,-92.7 657.8,-80.6 657.9,-79.4 654.2,-78.8 645.8,-86.8" fill="#3c4c88" /><polygon points="472.5,-182.3 507.3,-150.6 508.9,-156.2 474.8,-187.7" fill="#3c4c88" /><polygon points="504.5,-153.2 507.3,-150.6 507.5,-151.3 505.6,-153.1" fill="#3a8c8c" /><polygon points="519.1,-138.4 530.5,-128.0 532.1,-135.4 520.9,-145.7" fill="#3a8c8c" /><polygon points="519.2,-139.0 530.7,-128.7 532.1,-135.4 520.9,-145.7" fill="#3c4c88" /><polygon points="528.8,-129.6 530.5,-128.0 531.3,-131.5 529.5,-133.1" fill="#4a9a9a" /><polygon points="540.4,-119.0 551.0,-109.5 552.1,-116.9 541.8,-126.4" fill="#3a8c8c" /><polygon points="540.5,-119.7 551.1,-110.1 552.1,-116.9 541.8,-126.4" fill="#3c4c88" /><polygon points="549.3,-110.9 551.0,-109.5 551.5,-113.0 549.9,-114.5" fill="#4a9a9a" /><polygon points="557.4,-103.3 562.6,-109.6 563.5,-117.2 558.4,-111.0" fill="#3a8c8c" /><polygon points="558.4,-111.0 563.5,-117.2 563.0,-113.1 557.7,-105.3" fill="#3c4c88" /><polygon points="568.0,-117.2 576.8,-128.0 577.3,-134.4 568.7,-123.6" fill="#3a8c8c" /><polygon points="568.7,-123.6 577.3,-134.4 577.0,-130.9 568.2,-118.8" fill="#3c4c88" /><polygon points="583.7,-136.2 592.7,-147.3 593.0,-154.1 584.2,-143.2" fill="#3a8c8c" /><polygon points="584.2,-143.2 593.0,-154.1 592.9,-150.4 583.8,-138.0" fill="#3c4c88" /><polygon points="603.5,-139.7 621.4,-122.3 621.1,-127.7 603.6,-145.0" fill="#3a8c8c" /><polygon points="603.6,-145.0 621.1,-127.7 621.2,-126.7 615.2,-128.3 603.5,-139.7" fill="#3c4c88" /><polygon points="629.7,-113.9 638.4,-105.3 637.8,-111.6 629.3,-120.1" fill="#3a8c8c" /><polygon points="629.3,-120.1 637.8,-111.6 637.9,-110.4 635.4,-108.3 629.7,-113.9" fill="#3c4c88" /><polygon points="644.5,-99.4 656.8,-87.4 656.1,-93.0 643.9,-104.9" fill="#80c850" /><polygon points="650.1,-93.9 656.4,-90.5 656.8,-87.4" fill="#30b0c0" /><polygon points="643.9,-104.9 656.1,-93.0 656.2,-91.9 652.6,-91.5 644.5,-99.4" fill="#3c4c88" /><line x1="331.1" y1="94.4" x2="518.4" y2="165.8" stroke="#a4a49c" stroke-width="1" stroke-dasharray="1.5 1.5"/><line x1="350.0" y1="53.5" x2="523.2" y2="130.7" stroke="#a4a49c" stroke-width="1" stroke-dasharray="1.5 1.5"/><line x1="366.5" y1="17.8" x2="527.5" y2="99.0" stroke="#a4a49c" stroke-width="1" stroke-dasharray="1.5 1.5"/><line x1="381.0" y1="-13.7" x2="531.4" y2="70.3" stroke="#a4a49c" stroke-width="1" stroke-dasharray="1.5 1.5"/><line x1="393.9" y1="-41.6" x2="535.0" y2="44.2" stroke="#a4a49c" stroke-width="1" stroke-dasharray="1.5 1.5"/><line x1="405.5" y1="-66.6" x2="538.3" y2="20.3" stroke="#a4a49c" stroke-width="1" stroke-dasharray="1.5 1.5"/><line x1="415.8" y1="-89.1" x2="541.3" y2="-1.6" stroke="#a4a49c" stroke-width="1" stroke-dasharray="1.5 1.5"/><line x1="425.2" y1="-109.4" x2="544.0" y2="-21.8" stroke="#a4a49c" stroke-width="1" stroke-dasharray="1.5 1.5"/><line x1="433.7" y1="-127.8" x2="546.6" y2="-40.4" stroke="#a4a49c" stroke-width="1" stroke-dasharray="1.5 1.5"/><line x1="441.5" y1="-144.7" x2="548.9" y2="-57.7" stroke="#a4a49c" stroke-width="1" stroke-dasharray="1.5 1.5"/><line x1="448.6" y1="-160.1" x2="551.1" y2="-73.8" stroke="#a4a49c" stroke-width="1" stroke-dasharray="1.5 1.5"/><line x1="455.2" y1="-174.2" x2="553.2" y2="-88.7" stroke="#a4a49c" stroke-width="1" stroke-dasharray="1.5 1.5"/><line x1="461.2" y1="-187.3" x2="555.1" y2="-102.7" stroke="#a4a49c" stroke-width="1" stroke-dasharray="1.5 1.5"/><line x1="429.2" y1="179.0" x2="516.6" y2="-153.1" stroke="#ffffff" stroke-width="0.8" stroke-dasharray="2 2"/><line x1="474.5" y1="193.0" x2="537.8" y2="-133.5" stroke="#ffffff" stroke-width="0.8" stroke-dasharray="2 2"/><line x1="518.4" y1="165.6" x2="589.7" y2="121.3" stroke="#a4a49c" stroke-width="1" stroke-dasharray="1.5 1.5"/><line x1="523.2" y1="130.5" x2="590.7" y2="82.7" stroke="#a4a49c" stroke-width="1" stroke-dasharray="1.5 1.5"/><line x1="527.5" y1="99.0" x2="591.7" y2="48.7" stroke="#a4a49c" stroke-width="1" stroke-dasharray="1.5 1.5"/><line x1="531.4" y1="70.6" x2="592.5" y2="18.6" stroke="#a4a49c" stroke-width="1" stroke-dasharray="1.5 1.5"/><line x1="534.9" y1="44.9" x2="593.3" y2="-8.2" stroke="#a4a49c" stroke-width="1" stroke-dasharray="1.5 1.5"/><line x1="538.1" y1="21.4" x2="594.0" y2="-32.3" stroke="#a4a49c" stroke-width="1" stroke-dasharray="1.5 1.5"/><line x1="541.0" y1="0.0" x2="594.6" y2="-54.1" stroke="#a4a49c" stroke-width="1" stroke-dasharray="1.5 1.5"/><line x1="543.7" y1="-19.7" x2="595.2" y2="-73.8" stroke="#a4a49c" stroke-width="1" stroke-dasharray="1.5 1.5"/><line x1="546.2" y1="-37.8" x2="595.7" y2="-91.8" stroke="#a4a49c" stroke-width="1" stroke-dasharray="1.5 1.5"/><line x1="548.5" y1="-54.5" x2="596.1" y2="-108.2" stroke="#a4a49c" stroke-width="1" stroke-dasharray="1.5 1.5"/><line x1="550.6" y1="-70.0" x2="596.6" y2="-123.4" stroke="#a4a49c" stroke-width="1" stroke-dasharray="1.5 1.5"/><line x1="552.6" y1="-84.5" x2="597.0" y2="-137.3" stroke="#a4a49c" stroke-width="1" stroke-dasharray="1.5 1.5"/><line x1="554.4" y1="-97.9" x2="597.3" y2="-150.2" stroke="#a4a49c" stroke-width="1" stroke-dasharray="1.5 1.5"/><line x1="533.5" y1="194.3" x2="568.2" y2="-125.5" stroke="#ffffff" stroke-width="0.8" stroke-dasharray="2 2"/><line x1="559.1" y1="180.9" x2="582.4" y2="-143.1" stroke="#ffffff" stroke-width="0.8" stroke-dasharray="2 2"/><line x1="588.5" y1="120.2" x2="699.8" y2="179.5" stroke="#a4a49c" stroke-width="1" stroke-dasharray="1.5 1.5"/><line x1="589.9" y1="81.9" x2="694.6" y2="144.3" stroke="#a4a49c" stroke-width="1" stroke-dasharray="1.5 1.5"/><line x1="591.1" y1="48.5" x2="690.0" y2="112.9" stroke="#a4a49c" stroke-width="1" stroke-dasharray="1.5 1.5"/><line x1="592.1" y1="19.1" x2="685.9" y2="84.7" stroke="#a4a49c" stroke-width="1" stroke-dasharray="1.5 1.5"/><line x1="593.1" y1="-6.9" x2="682.1" y2="59.2" stroke="#a4a49c" stroke-width="1" stroke-dasharray="1.5 1.5"/><line x1="593.9" y1="-30.2" x2="678.7" y2="36.1" stroke="#a4a49c" stroke-width="1" stroke-dasharray="1.5 1.5"/><line x1="594.6" y1="-51.1" x2="675.6" y2="15.0" stroke="#a4a49c" stroke-width="1" stroke-dasharray="1.5 1.5"/><line x1="595.3" y1="-70.0" x2="672.7" y2="-4.3" stroke="#a4a49c" stroke-width="1" stroke-dasharray="1.5 1.5"/><line x1="595.9" y1="-87.1" x2="670.1" y2="-22.0" stroke="#a4a49c" stroke-width="1" stroke-dasharray="1.5 1.5"/><line x1="596.4" y1="-102.7" x2="667.7" y2="-38.3" stroke="#a4a49c" stroke-width="1" stroke-dasharray="1.5 1.5"/><line x1="597.0" y1="-117.0" x2="665.5" y2="-53.4" stroke="#a4a49c" stroke-width="1" stroke-dasharray="1.5 1.5"/><line x1="597.4" y1="-130.1" x2="663.4" y2="-67.4" stroke="#a4a49c" stroke-width="1" stroke-dasharray="1.5 1.5"/><line x1="597.8" y1="-142.2" x2="661.5" y2="-80.5" stroke="#a4a49c" stroke-width="1" stroke-dasharray="1.5 1.5"/><line x1="642.1" y1="189.9" x2="625.2" y2="-126.8" stroke="#ffffff" stroke-width="0.8" stroke-dasharray="2 2"/><line x1="671.9" y1="203.6" x2="640.8" y2="-111.3" stroke="#ffffff" stroke-width="0.8" stroke-dasharray="2 2"/><line x1="308.3" y1="141.7" x2="465.8" y2="-199.4" stroke="#f4f4ec" stroke-width="4"/><line x1="308.3" y1="141.7" x2="465.8" y2="-199.4" stroke="#8a8a80" stroke-width="4" stroke-dasharray="0.8 1.6"/><line x1="312.5" y1="140.7" x2="386.5" y2="1" stroke="#ff0000" stroke-width="1"/><line x1="588.4" y1="165.6" x2="597.7" y2="-162.1" stroke="#f0f0f0" stroke-width="1"/><polyline points="296.4,170.39999999999998 380.1,193.10000000000002" stroke="#c8bcbc" stroke-width="0.9" stroke-dasharray="2 1.5" fill="none"/><polyline points="289.5,187.20000000000005 366.3,206.89999999999998" stroke="#c8bcbc" stroke-width="0.9" stroke-dasharray="2 1.5" fill="none"/><polyline points="282.6,201.89999999999998 354.5,218.70000000000005" stroke="#c8bcbc" stroke-width="0.9" stroke-dasharray="2 1.5" fill="none"/><polyline points="276.7,213.79999999999995 342.7,227.5" stroke="#c8bcbc" stroke-width="0.9" stroke-dasharray="2 1.5" fill="none"/><polyline points="335.8,237.39999999999998 389,185.79999999999995 544.7,232.39999999999998 640.5,190.60000000000002" stroke="#c8bcbc" stroke-width="0.9" stroke-dasharray="2 1.5" fill="none"/><polyline points="412.6,193.10000000000002 429.3,179.29999999999995" stroke="#c8bcbc" stroke-width="0.9" stroke-dasharray="2 1.5" fill="none"/><polyline points="455.9,205.5 473.6,193.10000000000002" stroke="#c8bcbc" stroke-width="0.9" stroke-dasharray="2 1.5" fill="none"/><polyline points="372.2,245.29999999999995 417.5,210.79999999999995 558,249" stroke="#c8bcbc" stroke-width="0.9" stroke-dasharray="2 1.5" fill="none"/><polyline points="395.9,229.5 447,240.29999999999995" stroke="#c8bcbc" stroke-width="0.9" stroke-dasharray="2 1.5" fill="none"/><polyline points="385,238.39999999999998 433.3,248.20000000000005" stroke="#c8bcbc" stroke-width="0.9" stroke-dasharray="2 1.5" fill="none"/><polyline points="460.8,235.39999999999998 478.5,226.60000000000002" stroke="#c8bcbc" stroke-width="0.9" stroke-dasharray="2 1.5" fill="none"/><polyline points="556.6,182.89999999999998 608.3,203.60000000000002" stroke="#c8bcbc" stroke-width="0.9" stroke-dasharray="2 1.5" fill="none"/><polyline points="531.5,198.10000000000002 581.7,215.89999999999998" stroke="#c8bcbc" stroke-width="0.9" stroke-dasharray="2 1.5" fill="none"/><polyline points="494.5,217.20000000000005 513,205" stroke="#c8bcbc" stroke-width="0.9" stroke-dasharray="2 1.5" fill="none"/><polyline points="495.8,242.29999999999995 507.7,235.70000000000005" stroke="#c8bcbc" stroke-width="0.9" stroke-dasharray="2 1.5" fill="none"/><polyline points="523.6,250.89999999999998 666.5,203.60000000000002" stroke="#c8bcbc" stroke-width="0.9" stroke-dasharray="2 1.5" fill="none"/><polyline points="564.5,243.60000000000002 604,255.5" stroke="#c8bcbc" stroke-width="0.9" stroke-dasharray="2 1.5" fill="none"/><polyline points="584.3,235 620.6,247.20000000000005" stroke="#c8bcbc" stroke-width="0.9" stroke-dasharray="2 1.5" fill="none"/><polyline points="637.4,215 674.1,229.60000000000002" stroke="#c8bcbc" stroke-width="0.9" stroke-dasharray="2 1.5" fill="none"/><polyline points="609.9,226.5 646.6,238.70000000000005" stroke="#c8bcbc" stroke-width="0.9" stroke-dasharray="2 1.5" fill="none"/><polyline points="267.3,223.9 309.3,141.7" fill="none" stroke="#f0f0e0" stroke-width="1.5" stroke-dasharray="1 1"/><polyline points="309.3,141.7 513,205 588.4,165.6 707,220" fill="none" stroke="#d8d0c8" stroke-width="0.8" stroke-dasharray="1.5 1.5"/><polyline points="707,220 573.3,263.3 460,235.4 424.4,256.1" fill="none" stroke="#c8c0c0" stroke-width="0.8" stroke-dasharray="1.5 1.5"/></svg>
<div class="t" style="left:1019px;top:674.84px;font-size:12px;line-height:12px;transform:scaleX(0.9);">Positie : ( 25545,-7737,0)</div>
<div class="t" style="left:1019px;top:686.44px;font-size:12px;line-height:12px;transform:scaleX(0.915);">Wand : 35.912 [m²] Bouwdeel 00127</div>
<svg class="a" style="left:3px;top:371px" width="4" height="20"><rect x="0" y="0" width="3" height="1" fill="#9c9c9c"/><rect x="0" y="2" width="3" height="1" fill="#9c9c9c"/><rect x="0" y="4" width="3" height="1" fill="#9c9c9c"/><rect x="0" y="6" width="3" height="1" fill="#9c9c9c"/><rect x="0" y="8" width="3" height="1" fill="#9c9c9c"/><rect x="0" y="10" width="3" height="1" fill="#9c9c9c"/><rect x="0" y="12" width="3" height="1" fill="#9c9c9c"/><rect x="0" y="14" width="3" height="1" fill="#9c9c9c"/><rect x="0" y="16" width="3" height="1" fill="#9c9c9c"/><rect x="0" y="18" width="3" height="1" fill="#9c9c9c"/></svg>
<svg class="a" style="left:40px;top:371px" width="4" height="20"><rect x="0" y="0" width="3" height="1" fill="#9c9c9c"/><rect x="0" y="2" width="3" height="1" fill="#9c9c9c"/><rect x="0" y="4" width="3" height="1" fill="#9c9c9c"/><rect x="0" y="6" width="3" height="1" fill="#9c9c9c"/><rect x="0" y="8" width="3" height="1" fill="#9c9c9c"/><rect x="0" y="10" width="3" height="1" fill="#9c9c9c"/><rect x="0" y="12" width="3" height="1" fill="#9c9c9c"/><rect x="0" y="14" width="3" height="1" fill="#9c9c9c"/><rect x="0" y="16" width="3" height="1" fill="#9c9c9c"/><rect x="0" y="18" width="3" height="1" fill="#9c9c9c"/></svg>
<svg class="a" style="left:267px;top:371px" width="4" height="20"><rect x="0" y="0" width="3" height="1" fill="#9c9c9c"/><rect x="0" y="2" width="3" height="1" fill="#9c9c9c"/><rect x="0" y="4" width="3" height="1" fill="#9c9c9c"/><rect x="0" y="6" width="3" height="1" fill="#9c9c9c"/><rect x="0" y="8" width="3" height="1" fill="#9c9c9c"/><rect x="0" y="10" width="3" height="1" fill="#9c9c9c"/><rect x="0" y="12" width="3" height="1" fill="#9c9c9c"/><rect x="0" y="14" width="3" height="1" fill="#9c9c9c"/><rect x="0" y="16" width="3" height="1" fill="#9c9c9c"/><rect x="0" y="18" width="3" height="1" fill="#9c9c9c"/></svg>
<svg class="a" style="left:382px;top:371px" width="4" height="20"><rect x="0" y="0" width="3" height="1" fill="#9c9c9c"/><rect x="0" y="2" width="3" height="1" fill="#9c9c9c"/><rect x="0" y="4" width="3" height="1" fill="#9c9c9c"/><rect x="0" y="6" width="3" height="1" fill="#9c9c9c"/><rect x="0" y="8" width="3" height="1" fill="#9c9c9c"/><rect x="0" y="10" width="3" height="1" fill="#9c9c9c"/><rect x="0" y="12" width="3" height="1" fill="#9c9c9c"/><rect x="0" y="14" width="3" height="1" fill="#9c9c9c"/><rect x="0" y="16" width="3" height="1" fill="#9c9c9c"/><rect x="0" y="18" width="3" height="1" fill="#9c9c9c"/></svg>
<svg class="a" style="left:601px;top:371px" width="4" height="20"><rect x="0" y="0" width="3" height="1" fill="#9c9c9c"/><rect x="0" y="2" width="3" height="1" fill="#9c9c9c"/><rect x="0" y="4" width="3" height="1" fill="#9c9c9c"/><rect x="0" y="6" width="3" height="1" fill="#9c9c9c"/><rect x="0" y="8" width="3" height="1" fill="#9c9c9c"/><rect x="0" y="10" width="3" height="1" fill="#9c9c9c"/><rect x="0" y="12" width="3" height="1" fill="#9c9c9c"/><rect x="0" y="14" width="3" height="1" fill="#9c9c9c"/><rect x="0" y="16" width="3" height="1" fill="#9c9c9c"/><rect x="0" y="18" width="3" height="1" fill="#9c9c9c"/></svg>
<svg class="a" style="left:14px;top:372px" width="18" height="18"><path d="M15.5 2.5 L6 12" stroke="#606060" stroke-width="3"/><path d="M2 16.5 L3.5 7.5 L11 15 Z" fill="#606060"/></svg>
<svg class="a" style="left:51px;top:372px" width="18" height="18"><path d="M9 2.5 A4.5 4.5 0 0 1 13.2 8.5 L11 12.5 L7 12.5 L4.8 8.5 A4.5 4.5 0 0 1 9 2.5 Z" fill="#0a90f0"/><rect x="7.2" y="13" width="3.6" height="2.5" fill="#999"/><path d="M2 2 L3 3 M16 2 L15 3 M1 8 H2.5 M15.5 8 H17 M2.5 13 L3.5 12 M15.5 13 L14.5 12" stroke="#666" stroke-width="1"/></svg>
<svg class="a" style="left:78px;top:372px" width="16" height="18"><path d="M8 2.5 A4.5 4.5 0 0 1 12.2 8.5 L10 12.5 L6 12.5 L3.8 8.5 A4.5 4.5 0 0 1 8 2.5 Z" fill="#606060"/><rect x="6.2" y="13" width="3.6" height="2.5" fill="#aaa"/></svg>
<svg class="a" style="left:103px;top:372px" width="19" height="18"><path d="M1.5 9 L9.5 5 L17.5 9 L17.5 13 L9.5 17 L1.5 13 Z" fill="#0a90f0"/><path d="M1.5 9 L9.5 13 L17.5 9 M9.5 13 V17" fill="none" stroke="#0060b0" stroke-width="0.8"/><path d="M1.5 9 V5 L9.5 1 L17.5 5 V9 M9.5 1 V5" fill="none" stroke="#ccc" stroke-width="0.8"/></svg>
<svg class="a" style="left:129px;top:374px" width="19" height="16"><path d="M1.5 6 L9.5 2 L17.5 6 L17.5 10 L9.5 14 L1.5 10 Z" fill="#0a90f0"/><path d="M1.5 6 L9.5 10 L17.5 6 M9.5 10 V14" fill="none" stroke="#0060b0" stroke-width="0.8"/></svg>
<div class="a" style="left:151px;top:370px;width:111px;height:21px;background:#fff"></div>
<div class="a" style="left:248px;top:370px;width:14px;height:21px;background:#e8e8e8"></div>
<svg class="a" style="left:252px;top:378px" width="8" height="5"><path d="M0 0 H8 L4 4.5 Z" fill="#000"/></svg>
<svg class="a" style="left:152px;top:372px" width="18" height="18"><path d="M2 6 L8 3 L16 5 L16 13 L10 16.5 L2 13.5 Z M2 6 L10 8.5 L16 5 M10 8.5 V16.5" fill="none" stroke="#555" stroke-width="1"/></svg>
<div class="t" style="left:173px;top:375.14px;font-size:12px;line-height:12px;transform:scaleX(0.975);color:#000">Niet transpar</div>
<svg class="a" style="left:278px;top:372px" width="19" height="18"><ellipse cx="9.5" cy="9" rx="3.8" ry="8" fill="none" stroke="#0a90f0" stroke-width="1.3"/><ellipse cx="9.5" cy="9" rx="8" ry="3.6" fill="none" stroke="#606060" stroke-width="1.3"/><circle cx="7.5" cy="8" r="1.4" fill="#0a90f0"/></svg>
<svg class="a" style="left:305px;top:372px" width="16" height="18"><path d="M4 9 V4 Q4 3 5 3 Q6 3 6 4 V8 V2.5 Q6 1.5 7 1.5 Q8 1.5 8 2.5 V8 V2 Q8 1 9 1 Q10 1 10 2 V8 V3.5 Q10 2.5 11 2.5 Q12 2.5 12 3.5 V12 Q12 17 8 17 L6 17 Q4 17 1.5 12 Q1 11 2 10.5 Q3 10 4 11.5 Z" fill="#606060"/></svg>
<svg class="a" style="left:332px;top:374px" width="16" height="16"><circle cx="6.5" cy="6" r="5" fill="#0a90f0" stroke="#606060" stroke-width="1.4"/><path d="M10 9.5 L14.5 14" stroke="#606060" stroke-width="2.6"/></svg>
<svg class="a" style="left:356px;top:372px" width="18" height="18"><path d="M1 5 V1 H5 Z M17 5 V1 H13 Z M1 13 V17 H5 Z" fill="#0a90f0"/><circle cx="8" cy="8" r="5" fill="#fff" stroke="#606060" stroke-width="1.6"/><path d="M11.5 11.5 L16.5 16.5" stroke="#606060" stroke-width="2.6"/></svg>
<svg class="a" style="left:394px;top:372px" width="18" height="18"><path d="M1.5 5 L9 1.5 L16.5 5 L16.5 13 L9 16.5 L1.5 13 Z" fill="none" stroke="#666" stroke-width="1" stroke-dasharray="2 1"/><path d="M1.5 5 L9 8.5 L16.5 5 M9 8.5 V16.5" fill="none" stroke="#666" stroke-width="1"/><path d="M9 1.5 V8.5 M1.5 13 L9 8.5 L16.5 13" fill="none" stroke="#ccc" stroke-width="0.7"/></svg>
<svg class="a" style="left:420px;top:372px" width="18" height="18"><path d="M1.5 5 L9 1.5 L16.5 5 L16.5 13 L9 16.5 L1.5 13 Z" fill="none" stroke="#666" stroke-width="1" stroke-dasharray="2 1"/><path d="M1.5 5 L9 8.5 L16.5 5 M9 8.5 V16.5" fill="none" stroke="#666" stroke-width="1"/><path d="M9 1.5 V8.5 M1.5 13 L9 8.5 L16.5 13" fill="none" stroke="#ccc" stroke-width="0.7"/></svg>
<svg class="a" style="left:446px;top:372px" width="18" height="18"><path d="M1.5 1.5 H10.5 V4.5 H15.5 V16.5 H1.5 Z" fill="none" stroke="#666" stroke-width="1.2"/><path d="M2 10.5 H15 M10 10.5 V16" stroke="#666" stroke-dasharray="2 1.5"/></svg>
<svg class="a" style="left:471px;top:372px" width="18" height="18"><path d="M1.5 5 L9 1.5 L16.5 5 L9 8.5 Z" fill="#0a90f0"/><path d="M1.5 5 L9 1.5 L16.5 5 L16.5 13 L9 16.5 L1.5 13 Z" fill="none" stroke="#666" stroke-width="1" stroke-dasharray="2 1"/><path d="M1.5 5 L9 8.5 L16.5 5 M9 8.5 V16.5" fill="none" stroke="#666" stroke-width="1"/><path d="M9 1.5 V8.5 M1.5 13 L9 8.5 L16.5 13" fill="none" stroke="#ccc" stroke-width="0.7"/></svg>
<svg class="a" style="left:497px;top:372px" width="18" height="18"><path d="M1.5 5 L9 8.5 L9 16.5 L1.5 13 Z" fill="#0a90f0"/><path d="M1.5 5 L9 1.5 L16.5 5 L16.5 13 L9 16.5 L1.5 13 Z" fill="none" stroke="#666" stroke-width="1" stroke-dasharray="2 1"/><path d="M1.5 5 L9 8.5 L16.5 5 M9 8.5 V16.5" fill="none" stroke="#666" stroke-width="1"/><path d="M9 1.5 V8.5 M1.5 13 L9 8.5 L16.5 13" fill="none" stroke="#ccc" stroke-width="0.7"/></svg>
<svg class="a" style="left:523px;top:372px" width="18" height="18"><path d="M9 1.5 L16.5 5 L16.5 10 L9 8.5 Z" fill="#0a90f0"/><path d="M1.5 5 L9 1.5 L16.5 5 L16.5 13 L9 16.5 L1.5 13 Z" fill="none" stroke="#666" stroke-width="1" stroke-dasharray="2 1"/><path d="M1.5 5 L9 8.5 L16.5 5 M9 8.5 V16.5" fill="none" stroke="#666" stroke-width="1"/><path d="M9 1.5 V8.5 M1.5 13 L9 8.5 L16.5 13" fill="none" stroke="#ccc" stroke-width="0.7"/></svg>
<svg class="a" style="left:549px;top:372px" width="18" height="18"><path d="M1.5 5 L9 1.5 L9 8.5 L1.5 12 Z" fill="#0a90f0"/><path d="M1.5 5 L9 1.5 L16.5 5 L16.5 13 L9 16.5 L1.5 13 Z" fill="none" stroke="#666" stroke-width="1" stroke-dasharray="2 1"/><path d="M1.5 5 L9 8.5 L16.5 5 M9 8.5 V16.5" fill="none" stroke="#666" stroke-width="1"/><path d="M9 1.5 V8.5 M1.5 13 L9 8.5 L16.5 13" fill="none" stroke="#ccc" stroke-width="0.7"/></svg>
<svg class="a" style="left:575px;top:372px" width="18" height="18"><path d="M16.5 5 L9 8.5 L9 16.5 L16.5 13 Z" fill="#0a90f0"/><path d="M1.5 5 L9 1.5 L16.5 5 L16.5 13 L9 16.5 L1.5 13 Z" fill="none" stroke="#666" stroke-width="1" stroke-dasharray="2 1"/><path d="M1.5 5 L9 8.5 L16.5 5 M9 8.5 V16.5" fill="none" stroke="#666" stroke-width="1"/><path d="M9 1.5 V8.5 M1.5 13 L9 8.5 L16.5 13" fill="none" stroke="#ccc" stroke-width="0.7"/></svg>
<svg class="a" style="left:612px;top:373px" width="19" height="16"><rect x="1" y="3" width="17" height="11" rx="1" fill="#606060"/><rect x="3" y="1.5" width="3" height="1.5" fill="#0a90f0"/><circle cx="7.5" cy="8.5" r="3.8" fill="none" stroke="#fff" stroke-width="1.2"/><circle cx="7.5" cy="8.5" r="2" fill="none" stroke="#ccc" stroke-width="0.8"/><rect x="13" y="5" width="3" height="1.5" fill="#fff"/></svg>
<svg class="a" style="left:638px;top:372px" width="18" height="18"><path d="M7.5 1.5 H16.5 V13.5 H10" fill="none" stroke="#777" stroke-width="1"/><path d="M12 4 V8 M9 8 H15" stroke="#777" stroke-dasharray="1 1"/><rect x="0.5" y="10" width="10" height="7" fill="#606060"/><rect x="1" y="8.5" width="3" height="1.5" fill="#0a90f0"/><circle cx="5" cy="13.5" r="2" fill="none" stroke="#fff" stroke-width="1"/></svg></body></html>
